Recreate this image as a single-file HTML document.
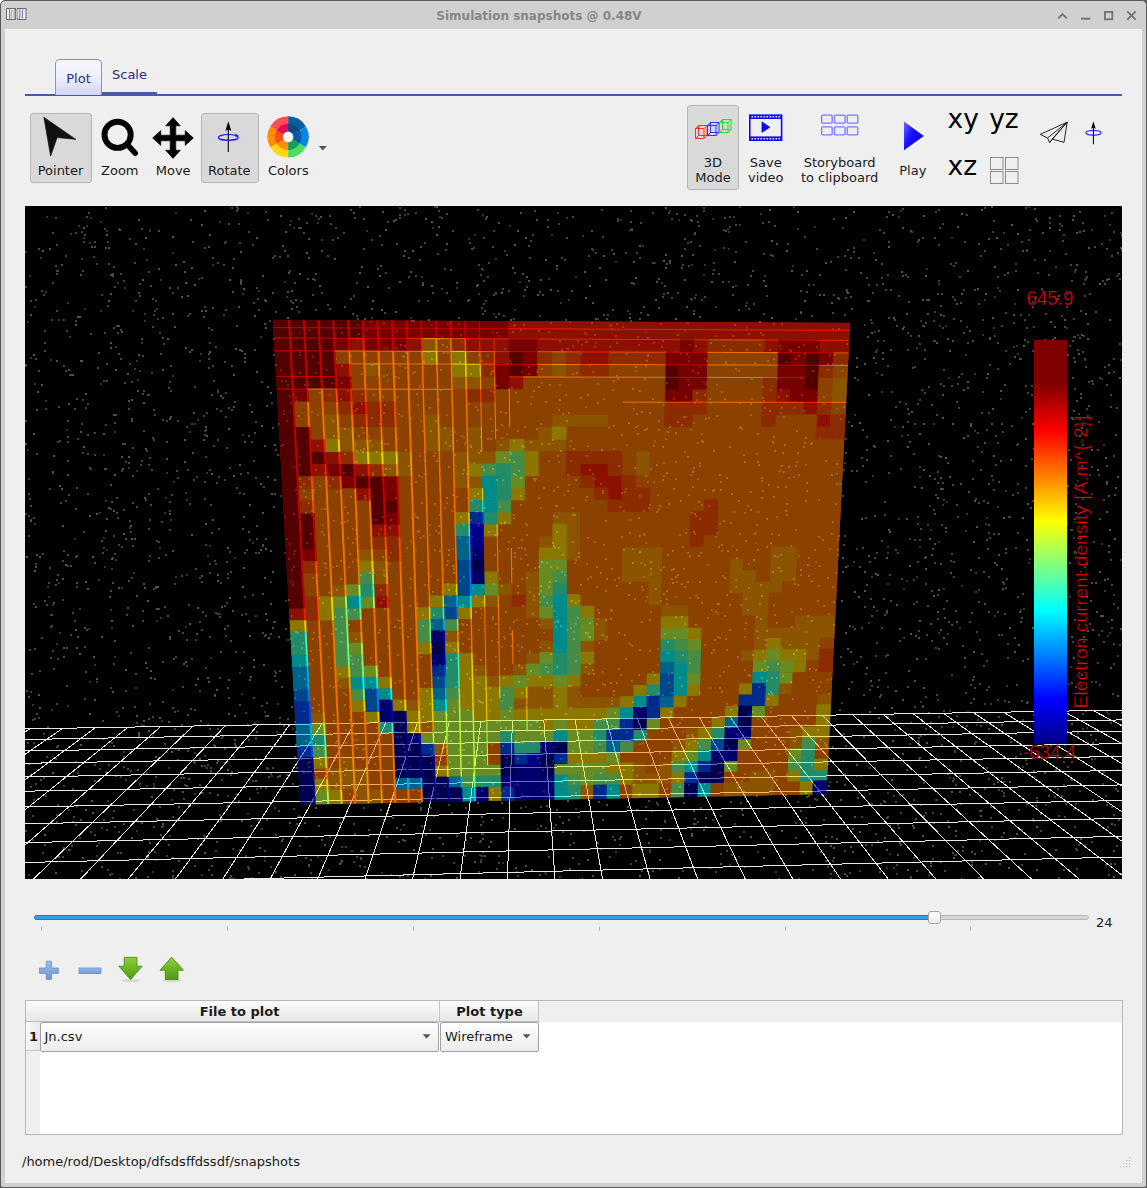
<!DOCTYPE html>
<html><head><meta charset="utf-8"><title>Simulation snapshots @ 0.48V</title>
<style>
html,body{margin:0;padding:0;}
body{width:1147px;height:1188px;overflow:hidden;background:#5f5f5f;font-family:"DejaVu Sans","Liberation Sans",sans-serif;font-size:13px;color:#1a1a1a;}
#win{position:absolute;left:0;top:0;width:1147px;height:1188px;box-sizing:border-box;border:1px solid #5a5a5a;background:#d0d0d0;border-radius:5px 5px 3px 3px;overflow:hidden;}
#content{position:absolute;left:4px;top:28px;width:1137px;height:1154px;background:#efefef;}
.abs{position:absolute;}
#title{position:absolute;left:0;top:0;width:1076px;height:29px;line-height:30px;text-align:center;font-weight:bold;color:#868686;font-size:12px;}
.lbl{position:absolute;text-align:center;white-space:nowrap;transform:translateX(-50%);line-height:15px;}
.btn{position:absolute;box-sizing:border-box;border:1px solid #b4b4b4;border-radius:3px;background:#d9d9d9;}
</style></head><body>
<div class="abs" style="left:0;top:0;width:5px;height:5px;background:#fff;"></div>
<div id="win">
<div id="title">Simulation snapshots @ 0.48V</div>
<div id="content"></div>
</div>
<!-- all following are absolutely positioned in page coords -->
<div id="ui" class="abs" style="left:0;top:0;width:1147px;height:1188px;">
<svg class="abs" style="left:0;top:0" width="1147" height="30" viewBox="0 0 1147 30">
 <g>
  <rect x="6.5" y="8.5" width="9" height="11" fill="#ececec" stroke="#6e6e6e"/>
  <rect x="17.5" y="8.5" width="8.5" height="11" fill="#ececec" stroke="#6e6e6e"/>
  <path d="M9.6 9v10" stroke="#8a8a9a" stroke-width="1.2"/><path d="M11.8 9.5l-.6 9" stroke="#c89a9a" stroke-width="1"/><path d="M14 9.5l-.5 9" stroke="#8fe08f" stroke-width="1.3"/>
  <path d="M17.6 9.5l.2 9" stroke="#f090e0" stroke-width="1.2"/><path d="M20 9l-.4 10" stroke="#8a8a8a" stroke-width="1.1"/><path d="M22.6 9.5l-.3 9" stroke="#7a86b8" stroke-width="1.2"/><path d="M15.4 9v10" stroke="#7a7a7a" stroke-width="1.6"/>
 </g>
 <g fill="none" stroke="#737373" stroke-width="1.8">
  <path d="M1058.2 18.3l4.3-4.3l4.3 4.3"/>
  <path d="M1081 18.7h9.4" stroke-width="2"/>
  <rect x="1104.9" y="11.9" width="7.4" height="7.4"/>
  <path d="M1127.3 11.3l8.4 8.4M1135.7 11.3l-8.4 8.4"/>
 </g>
</svg>

<div class="abs" style="left:25px;top:94px;width:1097px;height:2px;background:#4a5aa0;"></div>
<div class="abs" style="left:102px;top:92px;width:55px;height:4px;background:#4a5aa0;"></div>
<div class="abs" style="left:55px;top:59px;width:47px;height:36px;box-sizing:border-box;border:1px solid #8a92be;border-bottom:none;border-radius:5px 5px 0 0;background:linear-gradient(#f6f6ff 0%,#f0f0fd 45%,#d2d6f3 100%);"></div>
<div class="lbl" style="left:78.5px;top:71px;color:#2e2e7a;">Plot</div>
<div class="lbl" style="left:129.5px;top:67px;color:#2e2e7a;">Scale</div>

<div class="btn" style="left:29.5px;top:113px;width:62px;height:70px;"></div>
<div class="btn" style="left:200.5px;top:113px;width:58px;height:70px;"></div>
<div class="btn" style="left:687px;top:105px;width:52px;height:85px;"></div>
<svg class="abs" style="left:0;top:100px" width="1147" height="100" viewBox="0 100 1147 100">
 <defs>
  <linearGradient id="gplay" x1="0" y1="0" x2="1" y2="0.6"><stop offset="0" stop-color="#6a6aff"/><stop offset="0.45" stop-color="#1a10ff"/><stop offset="1" stop-color="#0a00f0"/></linearGradient>
 </defs>
 <!-- pointer -->
 <path d="M43.8 117.2L76 139.4L57.2 137.6L50.6 156.2Z" fill="#111" stroke="#111" stroke-width="0.6" stroke-linejoin="round"/>
 <!-- zoom -->
 <circle cx="117.6" cy="134.8" r="13.1" fill="none" stroke="#000" stroke-width="5.9"/>
 <path d="M127.6 144.8L135.2 153.2" stroke="#000" stroke-width="5.6" stroke-linecap="round"/>
 <!-- move -->
 <path d="M173 117.6l7.4 8.2h-4.6v9.4h9.4v-4.6l8.2 7.4l-8.2 7.4v-4.6h-9.4v9.4h4.6l-7.4 8.2l-7.4-8.2h4.6v-9.4h-9.4v4.6l-8.2-7.4l8.2-7.4v4.6h9.4v-9.4h-4.6z" fill="#000" stroke="#000" stroke-width="0.6" stroke-linejoin="round"/>
 <!-- rotate -->
 <ellipse cx="228.3" cy="137.4" rx="10" ry="2.9" fill="none" stroke="#1a1aff" stroke-width="1.2"/>
 <path d="M235.5 133.6l3.4 2.4l-3.6 1z" fill="#1a1aff"/>
 <path d="M228.3 152V128" stroke="#000" stroke-width="1.1"/>
 <path d="M228.3 121.3l3 9.6l-3-1.4l-3 1.4z" fill="#000"/>
 <!-- colour wheel -->
 <g transform="translate(288.1 136.9)">
  <path d="M0 0L0 -20.6A20.6 20.6 0 0 1 17.84 -10.3Z" fill="#0b5c9e"/>
  <path d="M0 0L17.84 -10.3A20.6 20.6 0 0 1 17.84 10.3Z" fill="#0c86dc"/>
  <path d="M0 0L17.84 10.3A20.6 20.6 0 0 1 0 20.6Z" fill="#4fdc64"/>
  <path d="M0 0L0 20.6A20.6 20.6 0 0 1 -17.84 10.3Z" fill="#ffd814"/>
  <path d="M0 0L-17.84 10.3A20.6 20.6 0 0 1 -17.84 -10.3Z" fill="#ff8e0c"/>
  <path d="M0 0L-17.84 -10.3A20.6 20.6 0 0 1 0 -20.6Z" fill="#ff4e52"/>
  <path d="M0 0L0 -13.2A13.2 13.2 0 0 1 11.43 -6.6Z" fill="#0a4a82"/>
  <path d="M0 0L11.43 -6.6A13.2 13.2 0 0 1 11.43 6.6Z" fill="#0b5c9e"/>
  <path d="M0 0L11.43 6.6A13.2 13.2 0 0 1 0 13.2Z" fill="#0ea25c"/>
  <path d="M0 0L0 13.2A13.2 13.2 0 0 1 -11.43 6.6Z" fill="#ff8e0c"/>
  <path d="M0 0L-11.43 6.6A13.2 13.2 0 0 1 -11.43 -6.6Z" fill="#ff500e"/>
  <path d="M0 0L-11.43 -6.6A13.2 13.2 0 0 1 0 -13.2Z" fill="#e20c5a"/>
  <circle r="5.3" fill="#fafafa"/>
 </g>
 <path d="M318.8 146h8l-4 4.4z" fill="#555"/>
 <!-- 3D cubes -->
 <g fill="none" stroke-width="1">
  <g stroke="#ff3030"><rect x="695.5" y="128.5" width="8.5" height="10"/><rect x="698.5" y="125.5" width="8.5" height="10"/><path d="M695.5 128.5l3-3M704 128.5l3-3M695.5 138.5l3-3M704 138.5l3-3"/></g>
  <g stroke="#3030ff"><rect x="707.5" y="125.5" width="8.5" height="10"/><rect x="710.5" y="122.5" width="8.5" height="10"/><path d="M707.5 125.5l3-3M716 125.5l3-3M707.5 135.5l3-3M716 135.5l3-3"/></g>
  <g stroke="#20e020"><rect x="719.5" y="122.5" width="8.5" height="10"/><rect x="722.5" y="119.5" width="8.5" height="10"/><path d="M719.5 122.5l3-3M728 122.5l3-3M719.5 132.5l3-3M728 132.5l3-3"/></g>
 </g>
 <!-- save video -->
 <rect x="749" y="114.4" width="33.4" height="26.6" fill="#0a0aff"/>
 <rect x="750.6" y="119" width="30.2" height="17.4" fill="#efefef"/>
 <path d="M751.5 116.7h30M751.5 138.7h30" stroke="#efefef" stroke-width="1.6" stroke-dasharray="1.6 1.4"/>
 <path d="M761.6 121.3l8.8 5.9l-8.8 5.9z" fill="#0a0aff"/>
 <!-- storyboard -->
 <g fill="none" stroke="#6e6eff" stroke-width="1.3" opacity="0.9">
  <rect x="821.6" y="115.2" width="10.6" height="8" rx="1"/><rect x="834.4" y="115.2" width="10.6" height="8" rx="1"/><rect x="847.2" y="115.2" width="10.6" height="8" rx="1"/>
  <rect x="821.6" y="126.8" width="10.6" height="8" rx="1"/><rect x="834.4" y="126.8" width="10.6" height="8" rx="1"/><rect x="847.2" y="126.8" width="10.6" height="8" rx="1"/>
 </g>
 <!-- play -->
 <path d="M904 121.5L923.8 135.9L904 150.2Z" fill="url(#gplay)"/>
 <!-- grid icon -->
 <g fill="none" stroke="#8c8c8c" stroke-width="1"><rect x="990.5" y="157.5" width="12.5" height="12"/><rect x="1005.5" y="157.5" width="12.5" height="12"/><rect x="990.5" y="171.5" width="12.5" height="12"/><rect x="1005.5" y="171.5" width="12.5" height="12"/></g>
 <!-- paper plane -->
 <g fill="none" stroke="#111" stroke-width="0.9" stroke-linejoin="round"><path d="M1067.2 122.1L1040.2 134.4L1047.6 138L1049.6 142.6L1052.2 139L1064 142.4Z"/><path d="M1067.2 122.1L1047.6 138M1067.2 122.1L1052.2 139M1067.2 122.1L1049.6 142.6"/></g>
 <!-- small rotate -->
 <ellipse cx="1093.4" cy="132.8" rx="7.6" ry="2.3" fill="none" stroke="#1a1aff" stroke-width="1.1"/>
 <path d="M1093.4 144.2V127" stroke="#000" stroke-width="1"/>
 <path d="M1093.4 121.3l2.3 7.4l-2.3-1l-2.3 1z" fill="#000"/>
 <text x="947.6" y="128.1" font-size="26.4" fill="#000" font-family="DejaVu Sans, Liberation Sans, sans-serif">xy</text>
 <text x="989.2" y="128.1" font-size="26.4" fill="#000" font-family="DejaVu Sans, Liberation Sans, sans-serif">yz</text>
 <text x="947.6" y="175.4" font-size="26.4" fill="#000" font-family="DejaVu Sans, Liberation Sans, sans-serif">xz</text>
</svg>
<div class="lbl" style="left:60.5px;top:163px;">Pointer</div>
<div class="lbl" style="left:119.8px;top:163px;">Zoom</div>
<div class="lbl" style="left:173.2px;top:163px;">Move</div>
<div class="lbl" style="left:229.3px;top:163px;">Rotate</div>
<div class="lbl" style="left:288.3px;top:163px;">Colors</div>
<div class="lbl" style="left:713px;top:155px;">3D<br>Mode</div>
<div class="lbl" style="left:765.8px;top:155px;">Save<br>video</div>
<div class="lbl" style="left:839.6px;top:155px;">Storyboard<br>to clipboard</div>
<div class="lbl" style="left:912.8px;top:163px;">Play</div>

<svg class="abs" style="left:25px;top:206px" width="1097" height="673" viewBox="25 206 1097 673">
<rect x="25" y="206" width="1097" height="673" fill="#000"/>
<path d="M146 785h2M320 759h2M409 587h2M153 783h2M815 561h2M264 711h2M500 444h2M563 494h2M132 310h2M334 755h2M769 834h2M770 691h2M200 353h2M355 734h2M325 762h2M189 431h2M729 864h2M293 227h2M423 422h2M883 340h2M400 829h2M271 775h2M930 529h2M517 644h2M755 532h2M1074 271h2M493 313h2M568 484h2M173 481h2M206 472h2M274 670h2M100 221h2M853 561h2M290 220h2M687 456h2M110 609h2M495 293h2M949 777h2M213 744h2M1066 492h2M1020 609h2M795 529h2M717 613h2M789 644h2M441 288h2M611 703h2M419 455h2M69 336h2M1028 206h2M920 320h2M482 821h2M654 262h2M489 710h2M836 408h2M623 722h2M1099 684h2M371 317h2M185 492h2M744 636h2M657 648h2M96 681h2M197 419h2M410 540h2M100 310h2M943 588h2M626 444h2M557 212h2M741 428h2M854 414h2M357 339h2M530 403h2M103 537h2M922 389h2M994 615h2M906 580h2M667 729h2M363 432h2M370 476h2M118 228h2M330 667h2M566 217h2M25 251h2M144 313h2M1066 522h2M639 846h2M1003 757h2M199 725h2M321 239h2M83 237h2M446 414h2M613 694h2M88 628h2M615 261h2M737 708h2M585 406h2M820 681h2M631 680h2M1028 314h2M999 730h2M807 615h2M405 699h2M645 600h2M537 828h2M461 749h2M1034 776h2M1017 353h2M284 552h2M247 212h2M194 423h2M231 877h2M853 663h2M869 767h2M56 643h2M90 217h2M1021 829h2M671 817h2M67 302h2M598 642h2M395 593h2M81 258h2M502 862h2M146 772h2M1015 263h2M928 874h2M551 605h2M69 849h2M503 694h2M876 372h2M312 659h2M762 651h2M439 216h2M1034 298h2M937 734h2M398 377h2M86 225h2M424 473h2M217 389h2M597 318h2M889 853h2M954 854h2M98 842h2M105 500h2M366 329h2M1077 480h2M328 656h2M985 523h2M591 736h2M898 216h2M975 572h2M744 669h2M676 581h2M111 627h2M226 806h2M1086 727h2M84 308h2M152 871h2M228 802h2M814 226h2M114 656h2M380 528h2M541 713h2M841 702h2M276 731h2M578 600h2M322 524h2M410 317h2M633 403h2M744 628h2M739 206h2M952 726h2M558 461h2M1021 417h2M657 664h2M172 252h2M984 703h2M1101 378h2M143 248h2M472 587h2M887 552h2M836 473h2M544 871h2M121 587h2M966 513h2M302 642h2M437 782h2M695 823h2M67 705h2M575 660h2M89 242h2M856 548h2M66 429h2M124 287h2M723 345h2M716 384h2M873 252h2M699 366h2M299 331h2M356 747h2M847 565h2M639 495h2M837 549h2M157 318h2M749 714h2M575 276h2M427 726h2M317 856h2M431 324h2M765 644h2M540 590h2M1084 359h2M805 464h2M966 326h2M414 736h2M1089 474h2M129 527h2M448 734h2M141 342h2M497 606h2M707 617h2M104 566h2M1028 562h2M770 389h2M830 678h2M209 545h2M560 302h2M219 221h2M456 440h2M715 306h2M868 622h2M703 274h2M1101 543h2M556 516h2M898 518h2M979 840h2M623 549h2M1104 215h2M543 632h2M1013 346h2M859 870h2M992 479h2M352 528h2M615 851h2M168 767h2M161 720h2M280 495h2M186 574h2M1084 279h2M690 429h2M446 633h2M234 557h2M990 703h2M1113 594h2M513 440h2M103 454h2M434 206h2M872 475h2M339 685h2M1073 537h2M1069 596h2M449 645h2M746 302h2M514 309h2M710 402h2M186 282h2M456 287h2M640 562h2M689 597h2M755 542h2M715 581h2M458 749h2M551 234h2M315 877h2M162 754h2M175 576h2M316 776h2M685 416h2M819 437h2M45 400h2M545 873h2M482 269h2M40 257h2M922 705h2M926 268h2M795 318h2M909 743h2M764 275h2M393 727h2M397 438h2M160 617h2M1016 444h2M517 781h2M575 623h2M1075 803h2M419 652h2M501 646h2M569 321h2M886 867h2M956 808h2M582 235h2M34 383h2M509 225h2M258 290h2M554 547h2M568 299h2M172 689h2M916 347h2M704 264h2M527 678h2M429 534h2M661 282h2M920 701h2M669 839h2M239 672h2M595 342h2M301 748h2M421 708h2M545 827h2M156 308h2M169 835h2M938 632h2M293 645h2M1080 571h2M361 393h2M894 729h2M371 444h2M745 598h2M797 228h2M420 420h2M491 430h2M919 476h2M642 245h2M139 370h2M430 575h2M501 700h2M900 210h2M637 425h2M993 327h2M321 508h2M1003 232h2M933 423h2M525 806h2M28 478h2M70 233h2M335 358h2M395 408h2M909 538h2M118 715h2M106 549h2M481 613h2M431 623h2M701 433h2M198 278h2M942 504h2M117 282h2M684 451h2M921 389h2M111 568h2M625 488h2M405 705h2M100 383h2M47 586h2M410 417h2M499 506h2M684 330h2M1006 685h2M29 275h2M1106 711h2M480 617h2M792 265h2M1014 837h2M1091 229h2M495 656h2M718 823h2M160 279h2M600 772h2M650 611h2M738 856h2M433 660h2M735 586h2M482 214h2M453 565h2M664 633h2M1066 327h2M780 647h2M830 878h2M499 550h2M186 499h2M357 324h2M164 512h2M874 331h2M59 632h2M994 296h2M480 859h2M144 320h2M1067 293h2M493 583h2M287 777h2M381 872h2M1107 635h2M387 380h2M793 206h2M785 725h2M938 283h2M951 237h2M876 610h2M712 218h2M1104 590h2M986 517h2M616 585h2M1034 259h2M107 800h2M654 440h2M136 470h2M351 659h2M175 212h2M945 325h2M285 600h2M554 610h2M427 300h2M773 604h2M134 368h2M863 751h2M643 576h2M901 435h2M829 781h2M678 219h2M453 707h2M727 228h2M657 494h2M459 580h2M777 556h2M1000 398h2M728 248h2M586 563h2M709 687h2M185 626h2M543 487h2M871 576h2M141 724h2M594 478h2M770 789h2M306 222h2M492 332h2M881 391h2M452 548h2M455 657h2M328 869h2M575 808h2M887 792h2M210 657h2M270 581h2M514 784h2M965 354h2M894 426h2M94 664h2M166 472h2M257 792h2M553 746h2M723 671h2M583 830h2M504 250h2M676 352h2M684 623h2M682 731h2M649 849h2M27 449h2M1005 490h2M470 647h2M585 499h2M252 542h2M1120 232h2M58 582h2M546 562h2M771 533h2M232 848h2M732 545h2M170 519h2M171 799h2M681 718h2M99 512h2M739 224h2M52 604h2M690 828h2M647 738h2M500 522h2M813 284h2M277 703h2M204 836h2M1068 683h2M775 871h2M284 281h2M445 701h2M688 356h2M1016 345h2M799 749h2M204 430h2M1109 224h2M757 718h2M656 511h2M1027 701h2M298 675h2M1022 766h2M548 278h2M484 688h2M570 685h2M948 377h2M597 618h2M1014 303h2M201 874h2M938 541h2M695 294h2M467 338h2M46 216h2M1063 735h2M390 874h2M891 391h2M50 359h2M981 850h2M292 728h2M887 686h2M89 681h2M1023 608h2M201 844h2M805 817h2M1049 250h2M115 559h2M760 213h2M580 695h2M242 293h2M481 466h2M1070 666h2M133 572h2M324 753h2M1078 413h2M693 422h2M177 710h2M390 552h2M146 259h2M1091 493h2M421 561h2M903 637h2M264 860h2M691 264h2M1060 770h2M800 823h2M435 759h2M974 430h2M1011 838h2M468 238h2M286 296h2M748 587h2M1044 607h2M502 817h2M255 738h2M199 360h2M1109 632h2M776 779h2M289 411h2M421 476h2M469 534h2M74 538h2M842 227h2M548 460h2M395 736h2M733 216h2M566 629h2M997 287h2M120 805h2M793 740h2M311 213h2M28 874h2M495 258h2M519 281h2M714 249h2M766 669h2M711 609h2M1077 334h2M296 400h2M674 752h2M149 229h2M295 397h2M87 738h2M79 608h2M48 596h2M746 327h2M45 291h2M280 445h2M916 576h2M887 546h2M51 709h2M368 835h2M430 748h2M669 210h2M388 647h2M627 310h2M32 704h2M318 649h2M479 854h2M496 721h2M335 628h2M965 530h2M997 506h2M78 225h2M629 229h2M25 365h2M34 523h2M473 462h2M794 407h2M539 315h2M155 587h2M848 421h2M959 627h2M942 722h2M474 234h2M976 724h2M212 264h2M974 373h2M128 467h2M578 816h2M298 815h2M219 613h2M1056 672h2M114 431h2M261 828h2M896 873h2M289 580h2M949 710h2M675 351h2M136 830h2M667 802h2M620 219h2M759 344h2M247 813h2M227 795h2M156 620h2M136 360h2M1058 393h2M98 579h2M399 365h2M569 445h2M1117 655h2M242 434h2M1029 558h2M235 793h2M825 860h2M691 474h2M298 349h2M852 626h2M260 336h2M929 505h2M76 806h2M1083 641h2M194 752h2M254 722h2M730 591h2M350 655h2M1094 758h2M432 227h2M1109 239h2M613 448h2M317 222h2M947 633h2M961 585h2M982 334h2M919 546h2M1117 769h2M541 382h2M629 313h2M864 324h2M483 628h2M27 321h2M984 299h2M643 533h2M946 501h2M779 761h2M461 341h2M165 497h2M202 792h2M619 844h2M539 601h2M466 541h2M322 368h2M172 375h2M471 552h2M424 460h2M68 809h2M115 346h2M829 548h2M366 230h2M728 231h2M565 394h2M421 276h2M478 293h2M226 806h2M704 644h2M832 363h2M1108 713h2M207 555h2M875 362h2M241 693h2M939 325h2M463 437h2M30 357h2M907 434h2M1107 621h2M876 349h2M137 379h2M34 306h2M585 684h2M903 588h2M728 281h2M312 577h2M1103 444h2M404 214h2M379 723h2M1060 429h2M1042 290h2M159 547h2M735 285h2M691 299h2M703 381h2M148 839h2M96 855h2M106 230h2M588 636h2M556 567h2M776 516h2M408 465h2M599 743h2M229 862h2M389 468h2M508 823h2M443 873h2M757 851h2M149 230h2M463 749h2M697 478h2M645 331h2" stroke="#343434" stroke-width="2" fill="none" shape-rendering="crispEdges" transform="translate(0 1)"/>
<path d="M688 360h2M143 725h2M101 294h2M881 277h2M210 770h2M837 256h2M297 502h2M953 576h2M639 743h2M728 665h2M725 361h2M742 814h2M216 482h2M970 569h2M471 500h2M532 613h2M1041 288h2M906 769h2M804 442h2M194 386h2M1018 809h2M828 613h2M832 312h2M845 269h2M162 419h2M357 318h2M261 705h2M1008 701h2M726 477h2M445 746h2M776 377h2M845 438h2M1085 710h2M597 689h2M421 825h2M940 563h2M489 687h2M716 415h2M433 695h2M913 857h2M202 611h2M350 380h2M978 877h2M996 564h2M540 423h2M331 382h2M141 460h2M225 725h2M82 270h2M532 741h2M439 664h2M878 330h2M774 352h2M306 684h2M217 613h2M358 435h2M908 733h2M719 637h2M774 225h2M62 599h2M1084 844h2M554 621h2M1079 790h2M694 297h2M142 393h2M480 274h2M719 772h2M573 842h2M513 318h2M561 257h2M446 502h2M1049 388h2M735 224h2M1060 770h2M1078 692h2M910 878h2M830 724h2M465 441h2M431 857h2M548 647h2M602 819h2M625 252h2M404 367h2M938 209h2M658 429h2M399 207h2M806 291h2M35 299h2M208 353h2M1037 359h2M1075 848h2M763 313h2M525 707h2M177 477h2M808 284h2M326 545h2M298 218h2M149 703h2M1082 498h2M267 768h2M663 293h2M60 502h2M181 724h2M575 602h2M1098 474h2M772 442h2M350 209h2M948 621h2M313 632h2M703 207h2M618 465h2M158 608h2M181 575h2M588 255h2M609 856h2M535 478h2M1071 529h2M285 380h2M874 557h2M513 514h2M832 328h2M356 282h2M475 669h2M946 643h2M211 532h2M870 598h2M1098 421h2M152 716h2M467 300h2M533 599h2M938 648h2M983 665h2M248 435h2M417 603h2M46 756h2M968 491h2M505 766h2M885 289h2M491 640h2M717 636h2M445 713h2M663 404h2M977 432h2M1040 830h2M482 702h2M140 815h2M830 261h2M73 816h2M148 394h2M256 287h2M699 401h2M790 545h2M449 595h2M125 690h2M788 760h2M420 537h2M853 247h2M151 469h2M153 826h2M768 484h2M673 488h2M503 315h2M1035 341h2M679 677h2M186 730h2M827 369h2M692 370h2M240 279h2M940 383h2M297 632h2M273 506h2M597 786h2M558 409h2M531 396h2M507 363h2M836 463h2M1064 744h2M230 875h2M422 282h2M1074 388h2M780 554h2M115 414h2M664 285h2M1015 270h2M211 874h2M839 483h2M605 520h2M756 630h2M914 366h2M257 298h2M130 770h2M784 722h2M323 562h2M356 739h2M162 317h2M1029 408h2M284 250h2M479 841h2M426 690h2M471 248h2M1085 366h2M760 332h2M823 819h2M652 870h2M656 802h2M32 839h2M977 446h2M162 337h2M136 722h2M249 404h2M541 368h2M588 673h2M545 720h2M451 812h2M1061 449h2M787 243h2M397 619h2M594 541h2M832 586h2M324 574h2M191 658h2M1081 465h2M94 432h2M770 254h2M30 786h2M756 752h2M871 803h2M298 415h2M997 368h2M155 859h2M1034 460h2M1113 231h2M405 449h2M428 351h2M875 833h2M951 385h2M240 473h2M104 332h2M564 259h2M918 741h2M630 863h2M372 472h2M694 402h2M697 821h2M503 790h2M184 784h2M356 559h2M811 315h2M444 507h2M714 639h2M67 565h2M226 561h2M613 380h2M27 742h2M1031 394h2M736 733h2M464 443h2M239 849h2M753 303h2M833 294h2M76 586h2M645 475h2M1051 381h2M503 677h2M694 740h2M687 379h2M498 335h2M512 725h2M341 365h2M738 370h2M696 399h2M233 406h2M643 510h2M243 493h2M279 670h2M225 635h2M844 850h2M537 639h2M399 876h2M539 762h2M960 760h2M782 740h2M865 673h2M275 834h2M140 464h2M52 282h2M746 800h2M248 435h2M845 745h2M827 679h2M166 855h2M487 355h2M871 685h2M281 686h2M795 465h2M600 572h2M643 534h2M199 577h2M199 784h2M55 217h2M172 877h2M317 445h2M337 419h2M633 408h2M267 476h2M504 348h2M1016 684h2M1031 458h2M978 589h2M882 283h2M217 728h2M774 555h2M456 496h2M725 638h2M132 502h2M752 711h2M708 721h2M1062 559h2M1033 326h2M204 247h2M126 614h2M795 837h2M396 243h2M553 515h2M888 241h2M194 865h2M273 338h2M408 257h2M321 292h2M188 604h2M664 820h2M880 694h2M708 505h2M657 804h2M529 591h2M504 668h2M28 535h2M573 638h2M313 791h2M1017 596h2M142 610h2M44 600h2M752 270h2M556 740h2M438 399h2M418 300h2M1084 358h2M116 711h2M974 289h2M444 785h2M102 552h2M782 675h2M209 469h2M1062 608h2M943 369h2M506 433h2M104 468h2M989 537h2M792 698h2M370 657h2M318 218h2M424 242h2M940 305h2M951 553h2M774 352h2M478 264h2M949 772h2M924 358h2M881 627h2M343 232h2M368 472h2M248 531h2M1013 322h2M457 779h2M611 328h2M437 579h2M560 450h2M224 605h2M1103 499h2M862 429h2M496 385h2M1039 486h2M418 802h2M736 549h2M863 694h2M570 460h2M776 243h2M245 712h2M300 227h2M975 741h2M934 311h2M584 332h2M273 621h2M490 438h2M971 612h2M62 856h2M1101 243h2M131 577h2M325 567h2M408 276h2M67 436h2M569 844h2M52 650h2M1072 340h2M857 797h2M204 765h2M478 871h2M646 833h2M521 547h2M809 805h2M49 567h2M691 709h2M608 427h2M141 228h2M152 735h2M248 739h2M341 632h2M236 210h2M265 715h2M951 674h2M747 505h2M812 869h2M38 717h2M934 513h2M647 354h2M797 801h2M205 544h2M521 539h2M1084 646h2M164 743h2M227 625h2M340 398h2M1021 617h2M213 380h2M661 730h2M251 877h2M728 727h2M345 742h2M410 628h2M33 517h2M85 407h2M273 354h2M374 741h2M982 833h2M512 568h2M371 239h2M739 402h2M513 461h2M957 516h2M478 629h2M523 295h2M373 572h2M407 213h2M836 781h2M814 549h2M159 332h2M744 773h2M818 401h2M605 558h2M917 241h2M290 300h2M286 774h2M981 451h2M778 567h2M451 510h2M1058 415h2M559 816h2M778 753h2M387 443h2M662 296h2M842 495h2M295 489h2M225 392h2M473 247h2M106 829h2M645 365h2M105 771h2M491 789h2M1091 466h2M732 294h2M209 563h2M1073 336h2M360 858h2M369 572h2M868 300h2M661 346h2M1021 700h2M744 512h2M266 767h2M617 218h2M148 493h2M355 538h2M984 788h2M704 783h2M247 866h2M914 706h2M684 214h2M211 865h2M539 874h2M834 354h2M660 837h2M754 533h2M781 465h2M850 257h2M1037 639h2M490 373h2M932 858h2M925 696h2M1072 641h2M386 374h2M630 210h2M737 787h2M687 735h2M887 583h2M82 399h2M941 293h2M517 784h2M490 390h2M540 707h2M175 656h2M1080 310h2M827 763h2M417 782h2M215 346h2M142 620h2M56 814h2M751 378h2M548 331h2M748 308h2M94 454h2M176 470h2M332 773h2M75 556h2M1022 719h2M828 693h2M943 608h2M1083 283h2M699 746h2M114 422h2M764 684h2M984 603h2M668 212h2M1015 547h2M67 460h2M117 852h2M319 485h2M1106 804h2M314 279h2M1011 721h2M523 446h2M333 344h2M39 670h2M160 353h2M722 281h2M188 804h2M648 800h2M1017 532h2M843 664h2M228 407h2M55 861h2M81 423h2M843 469h2M52 232h2M666 263h2M63 365h2M765 639h2M89 868h2M953 778h2M586 341h2M43 777h2M773 358h2M743 454h2M729 604h2M492 783h2M483 237h2M913 453h2M750 414h2M896 864h2M636 716h2M703 210h2M536 371h2M924 392h2M75 320h2M44 342h2M838 298h2M56 244h2M1058 815h2M65 255h2M902 208h2M483 759h2M483 280h2M387 221h2M860 775h2M572 216h2M109 874h2M602 767h2M865 481h2M883 598h2M817 600h2M93 256h2M689 867h2M988 728h2M1001 790h2M444 746h2M113 535h2M1095 739h2M952 296h2M835 503h2M292 581h2M784 741h2M587 537h2M1035 296h2M931 590h2M110 508h2M550 566h2M814 798h2M417 800h2M154 414h2M937 594h2M1101 630h2M918 630h2M385 272h2M839 709h2M500 411h2M56 310h2M434 549h2M880 803h2M323 534h2M406 757h2M666 598h2M636 775h2M129 520h2M918 758h2M649 412h2M1026 803h2M774 555h2M1116 275h2M687 242h2M474 655h2M936 414h2M143 390h2M279 256h2M172 816h2M361 716h2M978 303h2M212 257h2M931 640h2M352 663h2M340 522h2M695 595h2M216 408h2M329 394h2M1102 280h2M1041 301h2M206 412h2M490 798h2M231 207h2M639 257h2M707 564h2M1010 459h2M747 284h2M360 574h2M1008 516h2M513 325h2M265 538h2M549 581h2M441 336h2M1120 719h2M566 237h2M470 445h2M382 516h2M399 217h2M205 456h2M1072 377h2M730 349h2M1007 244h2M740 802h2M1033 714h2M979 810h2M541 443h2M430 807h2M726 594h2M998 634h2M638 674h2M711 764h2M195 568h2M520 329h2M402 605h2M706 360h2M367 435h2M832 521h2M412 372h2M384 312h2M1077 591h2M1078 844h2M934 478h2M147 876h2M268 776h2M964 241h2M580 353h2M1065 253h2M762 490h2M356 794h2M123 751h2M151 372h2M762 397h2M658 692h2M682 654h2M247 472h2M831 533h2M442 843h2M868 284h2M761 477h2M870 319h2M364 866h2M266 619h2M724 615h2M1048 550h2M616 342h2M718 273h2M507 797h2M585 341h2M805 500h2M812 833h2M461 435h2M309 663h2M1055 266h2M982 319h2M1058 480h2M255 615h2M1073 808h2M785 750h2M1003 795h2M956 401h2M413 320h2M1082 222h2M57 270h2M565 777h2M671 569h2M383 569h2M716 532h2M539 726h2M453 568h2M594 737h2M919 343h2M51 319h2M43 294h2M446 213h2M443 569h2M283 410h2M135 687h2M516 871h2M991 826h2M980 255h2M222 397h2M620 674h2M452 230h2M1063 674h2M777 486h2M658 508h2M257 819h2M1090 600h2M625 658h2M357 659h2M536 219h2M67 554h2M187 750h2M274 675h2M208 869h2M52 472h2M825 460h2M453 862h2M164 606h2M585 666h2M229 467h2M219 677h2M663 475h2M118 353h2M223 264h2M630 221h2M291 569h2M386 347h2M540 585h2M804 236h2M811 580h2M797 584h2M602 236h2M1032 301h2M266 702h2M380 442h2M415 275h2M764 660h2M515 740h2M1070 529h2M232 291h2M568 685h2M952 852h2M225 416h2M997 699h2M310 872h2M963 289h2M469 242h2M668 803h2M363 218h2M988 412h2M960 483h2M684 238h2M388 557h2M72 788h2M553 827h2M816 346h2M585 632h2M305 740h2M682 264h2M504 638h2M951 624h2M238 223h2M383 347h2M175 748h2M938 455h2M543 790h2M509 627h2M696 215h2M394 682h2M449 761h2M1037 579h2M480 861h2M1069 345h2M986 802h2M920 528h2M354 609h2M442 855h2M641 870h2M534 210h2M495 384h2M431 358h2M739 533h2M196 476h2M132 475h2M1032 350h2M890 600h2M59 440h2M159 806h2M419 802h2M245 855h2M493 230h2M1075 503h2M955 835h2M401 415h2M559 340h2M152 437h2M719 523h2M671 297h2M509 360h2M168 844h2M542 731h2M786 753h2M289 270h2M165 554h2M1089 293h2M129 238h2M169 529h2M857 379h2M897 552h2M277 454h2M264 299h2M816 690h2M616 682h2M532 234h2M329 836h2M101 540h2M675 478h2M747 609h2M606 318h2M333 520h2M1058 877h2M653 342h2M713 262h2M123 766h2M722 575h2M77 438h2M1044 259h2M971 861h2M662 694h2M988 532h2M1086 276h2M490 418h2M767 761h2M401 742h2M143 430h2M912 367h2M182 632h2M695 515h2M1080 397h2M318 825h2M256 788h2M134 262h2M465 729h2M341 779h2M922 237h2M555 824h2M503 636h2M1076 849h2M1025 207h2M875 351h2M468 762h2M861 457h2M917 516h2M356 856h2M937 293h2M420 809h2M279 722h2M401 633h2M925 812h2M993 489h2M1086 408h2M851 308h2M895 549h2M827 866h2M849 872h2M610 324h2M79 837h2M1007 657h2M1001 325h2M558 223h2M819 274h2M49 488h2M614 712h2M312 356h2M208 358h2M1042 601h2M392 817h2M104 228h2M370 321h2M356 315h2M429 829h2M914 539h2M862 465h2M383 375h2M53 668h2M1082 351h2M383 598h2M412 789h2M862 547h2M355 529h2M415 481h2M562 831h2M120 358h2M194 793h2M298 311h2M944 870h2M224 242h2M1050 745h2M796 461h2M1062 240h2M192 241h2M976 821h2M189 503h2M270 866h2M1049 472h2M361 373h2M995 435h2M556 268h2M354 833h2M154 851h2M1110 406h2M270 773h2M854 377h2M988 686h2M573 782h2M227 773h2M697 372h2M220 582h2M254 349h2M603 544h2M83 531h2M963 332h2M957 850h2M383 574h2M414 513h2M886 216h2M612 309h2M898 295h2M43 733h2M484 310h2M578 732h2M813 370h2M773 770h2M760 584h2M315 372h2M280 369h2M221 779h2M55 265h2M890 349h2M818 645h2M1000 248h2M704 296h2M341 382h2M1076 645h2M416 728h2M454 649h2M954 299h2M614 579h2M907 276h2M1025 465h2M994 335h2M162 701h2M574 562h2M592 371h2M477 209h2M651 810h2M1116 407h2M1087 415h2M715 335h2M480 840h2M70 634h2M1071 761h2M619 506h2M90 468h2M652 671h2M548 856h2M149 555h2M863 239h2M494 554h2M781 407h2M885 655h2M887 365h2M340 862h2M348 566h2M149 457h2M899 640h2M269 320h2M925 728h2M547 226h2M823 396h2M682 546h2M434 452h2M209 728h2M275 449h2M927 524h2M768 221h2M262 545h2M890 455h2M647 481h2M136 595h2M986 767h2M352 313h2M926 299h2M211 394h2M34 648h2M1064 672h2M737 734h2M454 431h2M781 323h2M1114 863h2M258 552h2M879 229h2M1113 663h2M856 470h2M377 674h2M796 430h2M847 249h2M382 396h2M300 486h2M679 786h2M770 711h2M1073 357h2M954 751h2M398 413h2M294 550h2M272 257h2M624 491h2M203 415h2M145 499h2M958 407h2M1070 459h2M483 303h2M925 583h2M756 616h2M352 561h2M340 641h2M991 724h2M218 476h2M1012 494h2M470 529h2M28 515h2M281 380h2M231 365h2M377 727h2M913 603h2M329 308h2M414 371h2M233 756h2M492 792h2M347 520h2M128 408h2M446 292h2M542 294h2M1027 392h2M25 513h2M482 586h2M699 316h2M1029 229h2M666 603h2M1117 607h2M1112 693h2M125 779h2M969 794h2M1024 853h2M293 513h2M631 228h2M1095 681h2M1022 660h2M243 651h2M803 410h2M111 873h2M562 413h2M590 576h2M1088 381h2M94 834h2M645 806h2M248 620h2M793 578h2M210 772h2M1085 278h2M618 632h2M540 806h2M593 714h2M407 794h2M68 494h2M1082 713h2M655 588h2M869 731h2M518 650h2M384 575h2M422 614h2M640 312h2M416 607h2M895 406h2M843 733h2M409 605h2M180 777h2M965 692h2M664 821h2M459 695h2M234 743h2M318 770h2M698 501h2M193 479h2M833 218h2M475 595h2M492 618h2M1057 298h2M943 499h2M1018 768h2M972 478h2M842 370h2M712 819h2M103 547h2M557 486h2M1097 662h2M383 322h2M286 420h2M709 398h2M380 265h2M201 629h2M866 449h2M649 851h2M1059 215h2M908 413h2M227 805h2M671 218h2M1032 306h2M887 816h2M30 691h2M744 796h2M800 311h2M132 545h2M505 786h2M84 646h2M617 220h2M362 474h2M315 309h2M924 734h2M359 206h2M156 540h2M170 365h2M272 427h2M289 395h2M786 361h2M66 330h2M652 212h2M215 563h2M393 371h2M846 291h2M837 554h2M954 750h2M624 634h2M622 326h2M919 539h2M1009 516h2M208 327h2M153 786h2M900 468h2M345 729h2M415 212h2M808 557h2M344 521h2M1079 337h2M309 383h2M1049 222h2M66 685h2M478 523h2M440 630h2M955 854h2M487 276h2M743 790h2M1063 761h2M699 462h2M938 244h2M186 426h2M1045 511h2M112 273h2M449 300h2M315 772h2M114 286h2M596 586h2M502 479h2M982 391h2M415 516h2M585 751h2M230 774h2M786 514h2M476 511h2M1003 792h2M670 715h2M986 429h2M1032 818h2M429 524h2M420 797h2M609 325h2M327 304h2M540 733h2M578 863h2M605 780h2M547 219h2M701 440h2M431 646h2M1075 484h2M1065 390h2M938 716h2M112 557h2M561 781h2M998 716h2M299 456h2M226 447h2M530 240h2M1097 449h2M1121 712h2M329 591h2M729 226h2M1025 411h2M229 551h2M812 679h2M578 556h2M76 398h2M388 287h2M730 801h2M114 826h2M57 745h2M865 785h2M1106 248h2M304 678h2M454 454h2M577 340h2M1031 385h2M294 721h2M514 324h2M400 736h2M697 442h2M214 695h2M457 623h2M974 687h2M289 543h2M887 274h2M765 735h2M326 643h2M687 322h2M1040 665h2M688 265h2M518 665h2M986 660h2M264 445h2M773 323h2M936 799h2M41 637h2M274 807h2M925 556h2M690 298h2M397 736h2M63 319h2M865 844h2M684 779h2M329 733h2M344 506h2M363 807h2M934 340h2M705 383h2M997 611h2M772 255h2M708 417h2M581 344h2M1103 817h2M713 762h2M29 649h2M632 769h2M694 818h2M905 403h2M754 772h2M688 494h2M407 875h2M720 481h2M1082 728h2M252 772h2M87 453h2M1077 732h2M883 800h2M363 248h2M147 394h2M629 532h2M299 665h2M937 618h2M284 516h2M302 770h2M516 619h2M204 747h2M265 787h2M224 361h2M225 309h2M888 472h2M585 333h2M339 673h2M114 553h2M669 262h2M767 666h2M424 878h2M209 342h2M510 362h2M1113 358h2M1105 795h2M500 529h2M1021 241h2M329 215h2M1004 613h2M81 870h2M117 332h2M844 535h2M559 876h2M935 799h2M890 419h2M478 452h2M723 229h2M56 746h2M640 780h2M372 688h2M975 498h2M107 305h2M1025 385h2M748 563h2M255 552h2M699 518h2M237 208h2M553 545h2M808 795h2M62 560h2M75 508h2M1108 874h2M219 814h2M924 557h2M631 645h2M295 337h2M148 647h2M241 667h2M495 316h2M481 307h2M256 538h2M671 692h2M347 537h2M952 780h2M869 689h2M891 714h2M352 542h2M509 459h2M826 721h2M317 414h2M984 207h2M1092 648h2M729 629h2M419 760h2M438 210h2M887 654h2M572 750h2M65 500h2M33 742h2M211 329h2M41 290h2M501 437h2M689 555h2M148 560h2M439 550h2M223 314h2M886 610h2M575 559h2M720 853h2M377 665h2M490 699h2M480 861h2M65 370h2M555 580h2M689 344h2M564 574h2M502 288h2M961 878h2M265 211h2M261 381h2M734 324h2M806 490h2M262 632h2M543 596h2M1110 394h2M303 490h2M371 417h2M403 356h2M182 686h2M887 748h2M444 427h2M840 656h2M907 686h2M574 514h2M113 663h2M169 381h2M934 562h2M201 581h2M35 358h2M447 583h2M843 544h2M292 783h2M161 521h2M877 864h2M780 412h2M1082 444h2M1017 483h2M230 571h2M1003 583h2M333 714h2M437 793h2M333 435h2M245 613h2M607 314h2M967 342h2M44 350h2M730 522h2M130 531h2M166 441h2M545 666h2M550 322h2M530 724h2M668 673h2M396 396h2M195 639h2M482 313h2M506 254h2M820 739h2M1066 306h2M844 314h2M132 447h2M1026 327h2M425 834h2M258 309h2M187 315h2M842 571h2M91 800h2M168 785h2M683 802h2M1064 473h2M1118 819h2M616 323h2M1115 434h2M1048 451h2M699 465h2M641 586h2M635 370h2M236 325h2M1084 566h2M683 568h2M1067 766h2M353 295h2M61 822h2M204 481h2M704 358h2M800 574h2M637 433h2M589 636h2M492 370h2M632 701h2M572 857h2M1071 682h2M70 565h2M172 875h2M520 495h2M258 872h2M866 584h2M570 707h2M481 268h2M227 573h2M521 578h2M462 604h2M660 829h2M993 220h2M450 269h2M1077 736h2M409 766h2M434 503h2M183 798h2M759 603h2M166 751h2M925 766h2M1005 350h2M199 621h2M113 266h2M881 540h2M296 767h2M735 579h2M639 649h2M701 504h2M630 320h2M325 563h2M400 555h2M399 680h2M174 711h2M771 693h2M153 588h2M786 731h2M1068 449h2M290 402h2M612 836h2M667 652h2M895 801h2M1035 487h2M441 591h2M1074 518h2M124 443h2M193 761h2M993 533h2M816 799h2M116 497h2M1059 223h2M69 374h2M917 740h2M1026 249h2M999 290h2M957 383h2M899 794h2M984 250h2M513 473h2M152 326h2M955 610h2M485 300h2M77 772h2M878 679h2M216 762h2M981 412h2M321 686h2M1078 453h2M884 614h2M1035 218h2M616 375h2M155 300h2M210 735h2M652 398h2M206 767h2M399 627h2M68 746h2M793 476h2M336 378h2M354 217h2M96 263h2M278 423h2M989 338h2M933 320h2M1071 280h2M1037 272h2M1104 366h2M475 406h2M766 295h2M611 725h2M561 349h2M640 222h2M571 290h2M174 728h2M556 705h2M355 443h2M255 737h2M938 280h2M1044 339h2M424 682h2M688 793h2M466 473h2M933 509h2M446 564h2M150 285h2M332 239h2M867 336h2M1079 651h2M525 554h2M923 782h2M300 300h2M116 325h2M556 505h2M1061 315h2M153 314h2M837 539h2M935 494h2M82 452h2M680 500h2M56 821h2M701 299h2M846 289h2M120 329h2M1017 443h2M1001 423h2M377 268h2M567 490h2M1082 424h2M555 626h2M611 568h2M1030 507h2M526 524h2M1121 718h2M351 850h2M680 353h2M875 655h2M762 386h2M435 530h2M388 693h2M866 436h2M676 213h2M453 506h2M536 620h2M347 390h2M191 423h2M204 498h2M312 294h2M28 763h2M432 591h2M458 323h2M980 469h2M74 408h2M360 784h2M1028 239h2M1041 629h2M466 673h2M226 602h2M368 829h2M568 819h2M845 297h2M726 745h2M322 387h2M743 777h2M25 286h2M688 743h2M417 404h2M123 823h2M75 824h2M550 653h2M1103 771h2M139 783h2M209 636h2M419 385h2M212 307h2M162 825h2M83 241h2M694 533h2M1098 634h2M739 427h2M926 634h2M597 383h2M766 768h2M943 710h2M35 783h2M445 249h2M719 474h2M327 745h2M884 747h2M1102 783h2M429 703h2M871 844h2M99 768h2M293 808h2M152 298h2M1027 549h2M494 534h2M265 634h2M856 775h2M917 403h2M1002 581h2M698 225h2M693 310h2M1014 637h2M396 330h2M292 302h2M992 231h2M545 401h2M1020 314h2M148 464h2M1035 552h2M236 487h2M757 433h2M618 668h2M255 477h2M562 554h2M919 466h2M909 441h2M713 269h2M635 426h2M589 364h2M312 707h2M942 223h2M289 224h2M580 741h2M491 744h2M340 327h2M675 596h2M55 584h2M1102 859h2M610 609h2M989 364h2M210 504h2M715 871h2M381 439h2M660 600h2M67 441h2M956 715h2M251 441h2M462 848h2M136 506h2M825 841h2M347 610h2M773 436h2M375 721h2M917 523h2M299 351h2M499 578h2M335 227h2M311 376h2M639 535h2M216 841h2M774 807h2M480 608h2M900 812h2M333 686h2M219 616h2M1113 603h2M654 674h2M42 553h2M1003 781h2M894 712h2M998 789h2M244 596h2M94 764h2M962 645h2M511 387h2M239 492h2M482 601h2M823 605h2M884 501h2M725 363h2M444 268h2M756 795h2M859 566h2M861 816h2M44 844h2M463 524h2M243 516h2M377 669h2M1120 359h2M1045 313h2M712 273h2M344 306h2M953 804h2M1120 559h2M1002 431h2M1021 864h2M478 700h2M597 609h2M832 746h2M642 742h2M1046 475h2M125 461h2M233 878h2M139 283h2M360 857h2M671 672h2M1106 465h2M334 616h2M172 292h2M1027 341h2M89 467h2M1077 349h2M658 420h2M495 292h2M773 496h2M903 326h2M603 314h2M805 631h2M902 227h2M734 823h2M218 528h2M596 623h2M896 325h2M735 368h2M960 320h2M1062 587h2M366 878h2M313 768h2M105 424h2M1105 864h2M404 840h2M524 548h2M133 809h2M1100 731h2M956 504h2M838 535h2M556 531h2M113 810h2M1024 339h2M589 622h2M1064 816h2M267 219h2M174 583h2M217 391h2M549 384h2M221 818h2M336 783h2M783 471h2M700 807h2M877 340h2M322 380h2M199 690h2M328 592h2M433 614h2M1022 593h2M658 307h2M856 661h2M63 550h2M485 218h2M550 684h2M510 645h2M148 528h2M740 604h2M513 517h2M169 510h2M407 636h2M1007 643h2M922 706h2M934 237h2M74 620h2M30 519h2M106 363h2M238 800h2M978 502h2M190 219h2M601 209h2M552 760h2M162 661h2M228 697h2M166 420h2M474 495h2M107 869h2M255 421h2M1110 559h2M864 606h2M932 548h2M980 721h2M775 727h2M798 555h2M481 786h2M117 517h2M274 255h2M697 221h2M636 252h2M298 227h2M844 462h2M936 694h2M236 206h2M122 707h2M635 860h2M908 301h2M235 651h2M87 493h2M745 540h2M990 817h2M86 216h2M1119 644h2M111 742h2M217 439h2M922 325h2M478 354h2M278 810h2M517 401h2M163 343h2M571 766h2M1064 455h2M1073 318h2M919 734h2M1034 383h2M818 499h2M914 423h2M585 726h2M758 686h2M684 586h2M560 758h2M514 272h2M869 561h2M404 757h2M250 825h2M570 440h2M933 340h2M943 315h2M757 637h2M823 403h2M671 578h2M691 220h2M974 743h2M941 726h2M673 398h2M768 731h2M1036 800h2M521 445h2M525 523h2M400 724h2M866 277h2M498 855h2M402 355h2M496 868h2M509 451h2M1011 425h2M471 536h2M730 709h2M1113 455h2M1027 658h2M851 470h2M1004 700h2M629 643h2M842 760h2M312 278h2M587 632h2M419 259h2M1111 584h2M374 763h2M953 265h2M570 627h2M270 633h2M340 560h2M467 497h2M312 638h2M662 479h2M458 632h2M987 548h2M836 483h2M876 284h2M113 327h2M353 823h2M1086 563h2M63 785h2M695 345h2M882 358h2M801 822h2M437 253h2M744 866h2M835 572h2M761 497h2M548 687h2M87 403h2M481 855h2M997 276h2M941 744h2M263 486h2M462 606h2M726 649h2M942 482h2M592 473h2M173 789h2M598 801h2M623 510h2M244 552h2M418 790h2M883 232h2M55 758h2M110 687h2M194 762h2M872 292h2M488 531h2M415 549h2M221 737h2M899 401h2M169 638h2M106 380h2M602 490h2M1074 826h2M108 764h2M519 720h2M818 585h2M865 517h2M675 461h2M677 292h2M534 480h2M29 498h2M726 703h2M1006 578h2M1033 820h2M650 573h2M498 773h2M876 642h2M910 335h2M103 380h2M102 720h2M1063 784h2M937 471h2M704 489h2M888 211h2M515 474h2M493 294h2M611 610h2M362 749h2M1070 264h2M877 840h2M750 275h2M709 867h2M256 525h2M1064 410h2M819 565h2M1070 778h2M907 332h2M606 728h2M361 427h2M679 722h2M1074 336h2M520 558h2M756 524h2M360 449h2M1088 405h2M153 439h2M47 726h2M403 746h2M884 514h2M492 246h2M700 552h2M796 649h2M757 511h2M1091 681h2M609 346h2M1084 295h2M1110 722h2M833 870h2M28 493h2M355 461h2M1080 685h2M464 855h2M830 873h2M457 681h2M612 389h2M815 669h2M719 675h2M337 679h2M1055 558h2M203 835h2M186 665h2M726 850h2M860 656h2M988 611h2M1077 744h2M1001 836h2M808 575h2M978 557h2M723 247h2M844 784h2M966 214h2M1114 494h2M798 474h2M646 733h2M947 820h2M308 329h2M665 438h2M644 564h2M118 831h2M88 212h2M148 271h2M279 717h2M172 857h2M653 445h2M308 502h2M946 600h2M1049 396h2M581 878h2M610 733h2M25 420h2M935 211h2M615 726h2M818 536h2M187 714h2M508 290h2M897 824h2M287 384h2M224 479h2M800 312h2M832 860h2M487 438h2M326 369h2M649 504h2M913 799h2M874 446h2M524 426h2M380 589h2M540 507h2M448 804h2M1048 795h2M48 582h2M177 287h2M1080 393h2M1020 753h2M997 342h2M874 707h2M833 601h2M355 638h2M330 577h2M1004 274h2M470 646h2M1099 377h2M977 719h2M246 549h2M32 719h2M315 215h2M1111 627h2M271 402h2M313 698h2M146 667h2M1039 351h2M1038 724h2M282 838h2M816 248h2M788 477h2M272 627h2M420 807h2M907 349h2M72 775h2M262 593h2M611 700h2M1054 796h2M811 764h2M418 736h2M515 392h2M721 550h2M905 274h2M35 563h2M172 870h2M146 450h2M124 382h2M572 373h2M359 865h2M723 520h2M86 629h2M907 421h2M127 768h2M1036 220h2M352 402h2M1009 363h2M213 445h2M558 547h2M925 658h2M1113 371h2M252 780h2M623 782h2M45 408h2M157 488h2M699 245h2M528 245h2M264 635h2M735 251h2M1063 466h2M1015 733h2M748 674h2M928 386h2M646 596h2M1092 383h2M439 514h2M149 519h2M433 815h2" stroke="#444442" stroke-width="2" fill="none" shape-rendering="crispEdges" transform="translate(0 1)"/>
<path d="M217 580h2M482 851h2M151 796h2M395 311h2M446 714h2M668 682h2M533 390h2M524 289h2M174 326h2M888 246h2M183 777h2M667 554h2M158 268h2M659 868h2M937 497h2M944 617h2M875 573h2M323 635h2M781 830h2M677 334h2M1080 838h2M169 418h2M795 358h2M541 561h2M1106 511h2M211 473h2M481 751h2M1054 543h2M28 696h2M847 292h2M81 360h2M235 745h2M692 471h2M749 675h2M1052 339h2M335 742h2M994 839h2M692 736h2M1013 314h2M691 833h2M1073 410h2M592 669h2M1117 695h2M275 364h2M964 657h2M113 745h2M438 525h2M940 314h2M138 292h2M805 724h2M770 542h2M596 720h2M436 460h2M638 517h2M501 292h2M1108 364h2M822 539h2M1060 348h2M110 342h2M63 847h2M168 721h2M445 442h2M613 253h2M431 285h2M648 842h2M228 428h2M1027 503h2M456 282h2M209 351h2M425 218h2M844 773h2M866 667h2M634 467h2M557 621h2M1050 715h2M382 556h2M438 226h2M762 334h2M1055 747h2M895 690h2M336 740h2M961 293h2M282 444h2M101 866h2M647 337h2M540 746h2M169 513h2M521 692h2M84 627h2M422 716h2M629 317h2M875 259h2M945 527h2M996 237h2M114 474h2M646 360h2M860 272h2M94 699h2M887 716h2M788 466h2M128 400h2M103 819h2M695 624h2M786 395h2M89 713h2M232 610h2M341 860h2M130 525h2M62 578h2M428 606h2M837 297h2M669 260h2M819 294h2M896 604h2M777 663h2M930 722h2M108 247h2M291 290h2M160 834h2M1111 255h2M761 669h2M1092 799h2M239 464h2M794 583h2M386 836h2M665 207h2M620 836h2M910 633h2M1025 438h2M647 314h2M53 455h2M742 814h2M933 822h2M433 736h2M1063 869h2M793 653h2M977 288h2M440 369h2M802 851h2M79 653h2M459 606h2M254 315h2M308 864h2M112 275h2M204 852h2M603 255h2M614 839h2M123 756h2M468 299h2M364 318h2M94 562h2M947 773h2M923 469h2M971 864h2M693 823h2M233 374h2M919 433h2M315 469h2M853 211h2M521 646h2M887 440h2M493 391h2M666 472h2M957 226h2M863 736h2M354 410h2M401 607h2M886 849h2M985 863h2M496 479h2M1018 644h2M731 854h2M1119 377h2M923 325h2M362 758h2M681 685h2M763 857h2M83 227h2M461 631h2M418 530h2M637 336h2M856 764h2M413 692h2M148 718h2M381 309h2M658 781h2M66 647h2M136 715h2M268 637h2M53 602h2M459 361h2M61 488h2M521 667h2M1045 677h2M545 259h2M55 872h2M672 582h2M923 687h2M264 577h2M149 842h2M705 826h2M56 360h2M585 766h2M1048 561h2M199 758h2M504 522h2M448 466h2M840 799h2M1001 724h2M618 577h2M242 586h2M731 493h2M156 818h2M838 328h2M36 409h2M636 809h2M476 285h2M1076 264h2M626 353h2M1064 555h2M187 295h2M446 346h2M785 794h2M34 570h2M272 571h2M1076 232h2M206 435h2M663 462h2M1035 805h2M134 538h2M771 317h2M911 411h2M538 330h2M650 561h2M980 810h2M586 455h2M955 830h2M437 767h2M776 677h2M411 730h2M513 537h2M737 656h2M925 568h2M746 349h2M439 837h2M597 842h2M825 744h2M122 468h2M1043 513h2M664 757h2M1050 616h2M728 748h2M1072 418h2M148 851h2M243 567h2M30 520h2M1044 772h2M569 868h2M1078 353h2M431 626h2M686 353h2M475 611h2M115 369h2M522 605h2M260 549h2M344 453h2M854 591h2M952 340h2M852 828h2M823 294h2M85 581h2M845 566h2M260 483h2M121 456h2M477 493h2M931 554h2M1055 849h2M446 644h2M412 250h2M559 384h2M520 212h2M936 342h2M315 807h2M518 547h2M371 364h2M447 323h2M428 319h2M617 378h2M185 347h2M778 396h2M801 394h2M779 345h2M347 512h2M189 351h2M605 279h2M138 732h2M923 215h2M985 293h2M902 753h2M341 616h2M191 267h2M703 829h2M633 784h2M728 749h2M786 774h2M877 574h2M409 749h2M963 437h2M256 731h2M189 623h2M1055 769h2M259 847h2M788 731h2M1099 571h2M750 403h2M804 353h2M537 757h2M662 340h2M584 271h2M561 571h2M897 854h2M724 577h2M937 611h2M644 378h2M656 464h2M589 469h2M72 374h2M573 448h2M603 719h2M141 338h2M410 483h2M694 233h2M1020 621h2M710 712h2M339 822h2M702 441h2M765 741h2M767 360h2M209 234h2M1052 415h2M397 471h2M1046 424h2M79 316h2M864 590h2M67 474h2M952 423h2M311 510h2M333 720h2M370 681h2M720 863h2M906 313h2M1023 345h2M1050 321h2M889 531h2M514 828h2M546 831h2M671 672h2M26 690h2M800 569h2M156 608h2M570 833h2M684 279h2M994 562h2M1107 578h2M774 450h2M967 387h2M864 363h2M772 571h2M253 666h2M1091 449h2M436 206h2M556 265h2M390 519h2M922 299h2M786 250h2M907 869h2M77 316h2M972 679h2M1073 215h2M108 507h2M477 284h2M205 426h2M137 769h2M1071 636h2M131 418h2M790 681h2M959 775h2M956 621h2M393 220h2M628 422h2M483 469h2M677 780h2M621 434h2M456 877h2M645 818h2M91 800h2M423 361h2M635 277h2M956 303h2M256 371h2M94 246h2M224 628h2M295 631h2M1041 482h2M528 373h2M1121 249h2M605 619h2M830 845h2M249 504h2M272 292h2M528 280h2M197 678h2M430 430h2M867 300h2M1075 512h2M1113 876h2M509 710h2M127 607h2M833 847h2M203 439h2M640 706h2M580 397h2M930 623h2M538 566h2M231 771h2M766 518h2M1035 578h2M1074 361h2M380 809h2M77 636h2M804 710h2M311 411h2M1091 380h2M663 260h2M1051 624h2M827 577h2M49 248h2M650 568h2M405 352h2M1092 629h2M851 425h2M480 450h2M162 823h2M1067 485h2M217 574h2M91 246h2M484 507h2M721 544h2M496 429h2M791 270h2M585 297h2M540 279h2M908 670h2M422 284h2M568 412h2M631 229h2M360 784h2M240 251h2M287 317h2M68 403h2M113 414h2M687 552h2M238 306h2M959 791h2M925 275h2M844 873h2M267 715h2M806 270h2M484 855h2M115 775h2M1108 372h2M172 236h2M200 720h2M183 261h2M40 779h2M275 871h2M201 765h2M1036 826h2M859 831h2M145 237h2M137 390h2M667 641h2M526 623h2M267 386h2M922 835h2M184 271h2M1036 869h2M833 624h2M379 661h2M452 565h2M712 490h2M365 741h2M250 676h2M514 552h2M142 279h2M480 701h2M467 782h2M1079 231h2M988 238h2M504 716h2M778 878h2M417 517h2M1002 588h2M1032 423h2M25 364h2M997 781h2M481 360h2M639 875h2M1111 806h2M781 740h2M396 467h2M1097 469h2M175 264h2M991 423h2M998 554h2M846 343h2M501 585h2M761 595h2M705 796h2M753 559h2M1011 224h2M623 769h2M359 272h2M431 221h2M1120 628h2M711 281h2M698 555h2M984 442h2M216 689h2M518 470h2M892 740h2M671 741h2M125 538h2M768 693h2M96 513h2M831 302h2M438 338h2M666 382h2M724 398h2M25 443h2M642 589h2M309 761h2M970 425h2M659 859h2M663 566h2M241 820h2M280 876h2M96 678h2M910 230h2M1049 217h2M1059 229h2M319 362h2M304 822h2M36 554h2M363 448h2M548 443h2M384 443h2M383 412h2M249 679h2M967 381h2M864 571h2M1067 354h2M977 792h2M1001 568h2M847 648h2M635 366h2M33 354h2M693 810h2M345 768h2M587 578h2M65 564h2M1114 538h2M546 602h2M244 353h2M420 246h2M336 565h2M145 662h2M93 656h2M72 821h2M715 611h2M766 630h2M33 799h2M693 531h2M627 806h2M591 322h2M916 658h2M550 289h2M783 416h2M593 673h2M675 616h2M293 566h2M404 345h2M665 267h2M810 443h2M353 739h2M767 698h2M170 416h2M510 319h2M666 788h2M741 809h2M395 219h2M274 479h2M1080 537h2M811 620h2M80 274h2M900 844h2M1054 786h2M870 680h2M214 694h2M125 669h2M514 244h2M656 281h2M940 456h2M144 497h2M234 739h2M369 440h2M981 209h2M533 478h2M845 632h2M418 475h2M229 597h2M228 713h2M285 231h2M403 798h2M477 802h2M776 622h2M295 299h2M907 446h2M343 472h2M804 300h2M751 728h2M1054 337h2M404 250h2M938 589h2M1000 460h2M681 424h2M950 572h2M201 575h2M910 876h2M59 485h2M992 317h2M1022 250h2M336 589h2M96 845h2M691 734h2M517 592h2M491 819h2M970 423h2M371 308h2M757 549h2M197 838h2M306 542h2M356 408h2M992 408h2M379 275h2M1052 345h2M668 503h2M1119 343h2M641 411h2M480 659h2M361 266h2M243 288h2M92 812h2M655 299h2M1016 833h2M318 597h2M600 483h2M1069 562h2M1017 233h2M856 366h2M430 875h2M534 567h2M307 771h2M675 432h2M420 656h2M470 519h2M1007 272h2M1073 657h2M859 422h2M52 471h2M443 352h2M929 538h2M287 255h2M780 389h2M833 857h2M1008 867h2M800 608h2M595 318h2M512 331h2M80 360h2M665 254h2M224 762h2M861 518h2M901 271h2M691 512h2M587 859h2M1056 504h2M442 344h2M999 863h2M610 618h2M1074 551h2M192 452h2M401 764h2M343 787h2M517 230h2M228 679h2M884 801h2M144 587h2M68 849h2M841 364h2M421 502h2M692 254h2M675 318h2M453 710h2M1009 627h2M308 257h2M891 707h2M560 625h2M159 717h2M234 715h2M910 722h2M75 324h2M324 844h2M1003 517h2M1117 252h2M525 237h2M805 437h2M691 835h2M299 516h2M397 654h2M540 825h2M400 344h2M686 306h2M530 670h2M132 625h2M499 720h2M277 776h2M197 607h2M1003 832h2M1087 323h2M940 629h2M376 451h2M670 711h2M1071 417h2M850 846h2M299 816h2M811 442h2M500 792h2M85 809h2M916 870h2M991 206h2M555 505h2M932 845h2M446 497h2M632 562h2M379 629h2M725 230h2M537 294h2M774 744h2M1045 588h2M143 402h2M497 641h2M1019 358h2M222 735h2M646 428h2M1054 326h2M967 435h2M675 576h2M113 510h2M410 271h2M193 747h2M923 815h2M82 857h2M915 635h2M111 620h2M1072 753h2M447 352h2M111 558h2M265 548h2M1090 734h2M516 780h2M785 510h2M334 258h2M610 682h2M291 308h2M536 721h2M375 519h2M546 805h2M923 423h2M538 386h2M761 677h2M306 387h2M734 261h2M71 374h2M265 613h2M807 564h2M362 850h2M303 772h2M201 224h2M247 724h2M348 624h2M343 761h2M138 354h2M736 557h2M1111 619h2M754 773h2M1108 495h2M394 626h2M235 348h2M930 862h2M486 216h2M918 335h2M947 338h2M1108 545h2M39 707h2M181 296h2M185 661h2M1111 823h2M871 332h2M732 335h2M639 793h2M685 396h2M580 584h2M385 229h2M154 678h2M667 431h2M466 624h2M1117 476h2M763 280h2M145 448h2M171 751h2M319 285h2M508 388h2M1115 487h2M721 691h2M538 624h2M75 761h2M510 453h2M178 860h2M848 688h2M942 394h2M240 281h2M287 291h2M798 346h2M974 500h2M220 820h2M481 816h2M919 757h2M1000 390h2M971 851h2M80 744h2M453 572h2M58 856h2M949 350h2M976 526h2M1113 850h2M478 329h2M1087 630h2M1041 409h2M446 667h2M718 603h2M495 623h2M446 243h2M281 840h2M490 841h2M644 429h2M353 212h2M1059 522h2M1034 208h2M1051 670h2M402 839h2M413 849h2M557 620h2M454 711h2M678 877h2M217 794h2M782 452h2M791 611h2M891 779h2M357 757h2M899 628h2M565 713h2M987 373h2M1049 489h2M717 603h2M679 534h2M869 711h2M1088 247h2M507 548h2M98 352h2M605 590h2M178 630h2M127 373h2M362 451h2M305 836h2M1081 334h2M748 333h2M993 455h2M384 474h2M713 450h2M37 391h2M538 593h2M143 583h2M914 680h2M805 822h2M658 278h2M639 551h2M929 475h2M207 677h2M89 515h2M1026 702h2M87 588h2M809 668h2M361 403h2M868 555h2M927 313h2M191 534h2M379 758h2M318 710h2M693 467h2M681 255h2M450 740h2M399 281h2M989 337h2M288 599h2M105 468h2M182 791h2M71 845h2M720 489h2M177 759h2M526 276h2M1104 579h2M410 578h2M301 568h2M973 541h2M592 875h2M324 748h2M306 252h2M324 472h2M973 651h2M1076 400h2M675 755h2M271 493h2M1032 627h2M960 803h2M750 836h2M288 272h2M902 794h2M627 796h2M344 704h2M308 238h2M759 321h2M101 636h2M299 372h2M255 780h2M178 806h2M518 681h2M1064 319h2M868 394h2M253 659h2M214 745h2M400 577h2M448 549h2M1014 651h2M110 484h2M688 384h2M658 769h2M396 827h2M1071 779h2M178 749h2M667 292h2M513 621h2M38 694h2M1001 777h2M556 809h2M769 209h2M575 479h2M987 502h2M1102 615h2M1046 736h2M349 553h2M589 285h2M1110 667h2M204 210h2M184 461h2M1104 283h2M110 293h2M299 478h2M288 558h2M671 761h2M131 837h2M817 729h2M888 529h2M270 392h2M780 570h2M575 792h2M587 394h2M536 428h2M993 783h2M341 332h2M1033 448h2M324 508h2M1079 418h2M1033 770h2M35 606h2M332 420h2M1065 803h2M150 677h2M961 213h2M42 250h2M902 328h2M873 606h2M294 874h2M605 639h2M321 839h2M184 439h2M162 369h2M227 769h2M283 725h2M282 245h2M112 691h2M1087 338h2M879 871h2M1081 427h2M256 237h2M299 354h2M1022 517h2M138 219h2M602 634h2M194 284h2M882 352h2M806 643h2M638 794h2M108 300h2M185 282h2M517 758h2M758 464h2M598 612h2M433 455h2M498 222h2M1096 611h2M552 439h2M470 446h2M690 219h2M745 622h2M953 857h2M172 313h2M756 737h2M672 550h2M205 523h2M522 635h2M299 273h2M942 417h2M980 815h2M155 756h2M148 730h2M512 267h2M186 785h2M280 215h2M41 384h2M967 270h2M914 486h2M798 878h2M334 745h2M167 615h2M1065 548h2M825 262h2M682 758h2M92 556h2M571 600h2M166 458h2M303 483h2M685 532h2M313 489h2M196 633h2M361 662h2M118 587h2M606 804h2M1106 279h2M169 636h2M295 689h2M110 274h2M30 505h2M477 409h2M790 350h2M39 556h2M1005 548h2M455 590h2M797 211h2M912 825h2M463 576h2M943 637h2M344 428h2M1047 679h2M109 596h2M694 513h2M1035 805h2M1099 283h2M188 778h2M1110 863h2M940 861h2M403 255h2M131 538h2M562 822h2M763 400h2M181 770h2M874 767h2M892 214h2M884 837h2M114 640h2M123 533h2M849 625h2M1071 723h2M641 621h2M751 398h2M249 798h2M523 324h2M515 867h2M437 677h2M131 399h2M538 497h2M765 285h2M174 326h2M683 416h2M279 775h2M261 425h2M304 384h2M1078 537h2M1014 356h2M918 239h2M1085 313h2M318 636h2M631 282h2M263 664h2M898 827h2M119 229h2M639 245h2M594 334h2M212 519h2M647 695h2M636 413h2M183 663h2M118 325h2M311 878h2M613 690h2M227 547h2M244 357h2M432 848h2M836 838h2M30 314h2M1092 742h2M423 535h2M718 546h2M739 836h2M76 582h2M969 330h2M128 456h2M332 478h2M468 638h2M1019 611h2M68 369h2M1017 289h2M697 742h2M858 596h2M902 426h2M378 632h2M395 497h2M752 654h2M388 563h2M818 686h2M176 819h2M688 784h2M842 557h2M699 692h2M1100 615h2M385 468h2M659 752h2M1086 596h2M375 657h2M729 446h2M1095 582h2M387 645h2M502 745h2M681 583h2M915 818h2M447 560h2M750 509h2M994 266h2M1081 433h2M974 853h2M195 684h2M1060 678h2M395 376h2M800 377h2M244 361h2M766 546h2M251 411h2M121 331h2M191 349h2M147 600h2M150 670h2M311 514h2M504 521h2M926 742h2M1105 457h2M1058 634h2M710 342h2M805 792h2M282 786h2M1120 247h2M886 557h2M469 678h2M1083 230h2M1095 311h2M602 492h2M522 742h2M629 582h2M52 772h2M349 719h2M800 312h2M244 441h2M63 647h2M461 623h2M291 615h2M80 431h2M373 394h2M310 533h2M918 637h2M372 474h2M147 856h2M1049 227h2M291 706h2M531 869h2M477 682h2M106 518h2M217 760h2M873 357h2M1040 813h2M621 536h2M831 474h2M249 635h2M873 445h2M76 647h2M416 393h2M56 579h2M265 300h2M1108 551h2M135 877h2M1058 295h2M141 822h2M744 461h2M785 486h2M1091 582h2M233 475h2M44 834h2M85 393h2M986 539h2M572 541h2M798 355h2M677 574h2M784 444h2M229 279h2M155 586h2M878 717h2M845 217h2M1010 741h2M220 395h2M906 518h2M567 348h2M771 240h2M1106 481h2M871 615h2M470 837h2M143 720h2M75 629h2M539 676h2M1108 278h2M632 388h2M1009 781h2M205 310h2M295 744h2M444 604h2M481 790h2M662 446h2M544 687h2M320 216h2M274 444h2M928 712h2M852 851h2M940 488h2M951 791h2M404 751h2M262 512h2M602 671h2M592 302h2M666 590h2M450 321h2M411 680h2M510 633h2M498 313h2M841 600h2M850 651h2M480 436h2M474 861h2M379 770h2M697 597h2M893 758h2M699 581h2M970 702h2M919 620h2M367 286h2M384 608h2M633 261h2M208 681h2M628 594h2M934 543h2M339 863h2M320 763h2M727 550h2M948 826h2M1121 234h2M157 586h2M610 788h2M705 418h2M893 317h2M559 399h2M909 565h2M138 734h2M940 477h2M518 664h2M135 243h2M913 827h2M207 724h2M675 808h2M201 310h2M358 333h2M854 816h2M576 372h2M329 685h2M530 441h2M899 842h2M463 469h2M295 731h2M270 550h2M548 586h2M510 707h2M529 651h2M26 556h2M921 487h2M800 810h2M289 822h2M750 491h2M945 457h2M400 701h2M827 363h2M411 320h2M567 800h2M1109 319h2M846 875h2M62 525h2M193 412h2M450 659h2M103 433h2M479 737h2M335 786h2M1072 219h2M639 390h2M693 313h2M843 406h2M552 542h2M83 446h2M599 267h2M933 595h2M436 234h2M1115 788h2M492 468h2M105 530h2M705 817h2M106 234h2M167 338h2M172 550h2M889 825h2M239 349h2M379 423h2M35 566h2M33 433h2M241 350h2M265 327h2M597 402h2M1042 232h2M732 286h2M660 323h2M482 838h2M1026 539h2M949 476h2M308 766h2M1117 790h2M1109 529h2M1079 435h2M221 606h2M278 636h2M856 357h2M488 846h2M372 300h2M381 454h2" stroke="#52524e" stroke-width="2" fill="none" shape-rendering="crispEdges" transform="translate(0 1)"/>
<path d="M123 280h2M120 776h2M656 779h2M1113 643h2M881 374h2M959 276h2M594 346h2M135 673h2M481 833h2M424 451h2M84 234h2M270 603h2M310 650h2M1051 452h2M1083 636h2M63 656h2M592 249h2M460 516h2M396 482h2M290 638h2M649 749h2M321 250h2M1057 788h2M57 804h2M31 673h2M995 464h2M967 711h2M979 683h2M296 823h2M233 258h2M308 865h2M779 470h2M578 552h2M826 746h2M248 868h2M105 207h2M663 593h2M866 459h2M32 815h2M158 230h2M978 601h2M539 646h2M399 214h2M508 541h2M506 757h2M997 442h2M441 217h2M771 677h2M353 861h2M963 389h2M303 232h2M1032 500h2M743 831h2M123 509h2M577 617h2M986 689h2M1111 212h2M120 273h2M769 410h2M1118 273h2M94 241h2M296 306h2M778 534h2M1056 693h2M918 737h2M350 496h2M190 708h2M1113 814h2M572 514h2M334 357h2M50 614h2M46 604h2M738 309h2M361 338h2M312 749h2M950 560h2M210 767h2M38 370h2M1044 509h2M118 544h2M1101 773h2M962 846h2M780 348h2M1094 246h2M343 692h2M44 330h2M205 429h2M365 354h2M360 850h2M952 484h2M795 822h2M111 501h2M204 755h2M760 618h2M462 473h2M940 813h2M293 466h2M121 470h2M1076 868h2M321 531h2M789 349h2M632 548h2M57 658h2M395 347h2M393 740h2M1089 623h2M138 736h2M526 534h2M806 796h2M150 504h2M886 817h2M845 452h2M711 652h2M681 616h2M886 612h2M107 241h2M161 826h2M998 481h2M285 628h2M331 633h2M252 594h2M920 735h2M76 555h2M577 763h2M460 334h2M765 718h2M615 335h2M851 681h2M972 460h2M907 408h2M392 784h2M611 249h2M252 244h2M677 421h2M831 836h2M969 621h2M81 231h2M208 246h2M90 831h2M305 512h2M254 432h2M724 217h2M1026 250h2M939 227h2M925 322h2M398 841h2M94 780h2M220 410h2M227 577h2M601 449h2M527 564h2M715 536h2M983 571h2M902 275h2M317 748h2M209 572h2M553 695h2M229 877h2M492 616h2M459 537h2M56 273h2M345 694h2M572 345h2M131 420h2M763 253h2M745 305h2M505 412h2M740 426h2M797 452h2M803 446h2M482 833h2M567 474h2M315 273h2M377 362h2M1004 384h2M520 477h2M287 639h2M619 838h2M169 287h2M701 602h2M955 262h2M858 257h2M533 595h2M435 420h2M350 355h2M501 802h2M689 767h2M464 361h2M1017 492h2M988 483h2M134 706h2M375 363h2M1075 269h2M465 839h2M153 409h2M128 580h2M916 601h2M262 275h2M720 815h2M58 319h2M110 590h2M677 724h2M955 784h2M794 740h2M61 264h2M941 524h2M600 848h2M520 504h2M634 598h2M336 491h2M988 778h2M835 748h2M556 666h2M962 850h2M452 494h2M87 434h2M379 235h2M488 262h2M364 495h2M429 407h2M85 671h2M340 578h2M811 370h2M1119 278h2M970 702h2M828 785h2M517 430h2M1005 312h2M301 647h2M299 464h2M994 844h2M692 486h2M514 556h2M239 242h2M471 500h2M365 497h2M208 367h2M253 460h2M364 498h2M422 430h2M991 475h2M294 282h2M322 602h2M684 248h2M924 349h2M468 403h2M356 450h2M189 805h2M130 652h2M169 501h2M264 850h2M427 584h2M879 696h2M129 363h2M416 669h2M652 262h2M1062 739h2M945 531h2M1001 634h2M1114 824h2M380 602h2M403 824h2M1075 552h2M1075 686h2M881 263h2M729 216h2M50 626h2M525 865h2M131 381h2M804 653h2M378 533h2M719 687h2M694 232h2M480 824h2M135 300h2M467 485h2M201 277h2M491 371h2M38 248h2M774 614h2M474 554h2M215 850h2M327 255h2M34 718h2M1079 211h2M349 793h2M1025 487h2M194 709h2M553 490h2M1116 845h2M877 686h2M973 698h2M389 527h2M430 762h2M1064 326h2M440 389h2M894 319h2M901 578h2M36 453h2M756 453h2M557 290h2M186 639h2M345 846h2M264 323h2M930 865h2M449 445h2M1099 518h2M293 553h2M990 806h2M517 875h2M102 738h2M383 819h2M786 503h2M586 496h2M376 727h2M168 387h2M975 591h2M220 651h2M981 653h2M919 399h2M1056 703h2M228 223h2M542 769h2M232 267h2M871 322h2M920 804h2M389 622h2M419 687h2M629 519h2M927 605h2M329 485h2M154 310h2M1061 225h2M465 807h2M673 726h2M551 832h2M187 469h2M978 243h2M761 480h2M50 657h2M90 333h2M209 792h2M970 684h2M937 699h2M120 852h2M101 827h2M217 262h2M1034 588h2M681 267h2M1107 826h2M733 363h2M943 385h2M1106 483h2M966 725h2M318 704h2M1093 541h2M829 354h2M942 488h2M602 683h2M520 807h2M917 561h2M603 398h2M689 662h2M983 500h2M76 487h2M1042 589h2M462 643h2M733 511h2M337 746h2M690 241h2M953 561h2M935 647h2M741 780h2M800 290h2M45 795h2M820 851h2M305 857h2M1106 384h2M1005 552h2M840 418h2M234 401h2M1045 804h2M303 710h2M1074 619h2M1036 797h2M158 541h2M1049 556h2M589 663h2M649 619h2M458 317h2M621 492h2M1026 763h2M650 468h2M231 409h2M392 797h2M648 507h2M960 302h2M307 278h2M105 247h2M735 704h2M1063 234h2M964 666h2M432 292h2M142 355h2M861 627h2M30 300h2M932 812h2M382 211h2M80 819h2M517 585h2M283 413h2M248 231h2M824 742h2M97 367h2M173 658h2M253 697h2M505 611h2M363 748h2M287 718h2M557 455h2M58 406h2M633 283h2M230 640h2M315 743h2M189 313h2M116 512h2M172 707h2M332 566h2M455 686h2M505 727h2M128 462h2M1085 593h2M225 241h2M121 546h2M299 845h2M566 420h2M253 302h2M75 232h2M772 441h2M1082 468h2M757 461h2M207 764h2M319 392h2M155 776h2M696 392h2M119 878h2M467 351h2M240 283h2M801 274h2M1020 358h2M902 699h2M659 505h2M260 787h2M349 706h2M572 507h2M1043 470h2M275 680h2M132 821h2M292 584h2M691 698h2M888 317h2M504 457h2M539 291h2M928 299h2M205 615h2M67 420h2M958 376h2M911 231h2M274 493h2M591 248h2M177 420h2M344 774h2M51 625h2M274 621h2M780 718h2M717 749h2M56 703h2M910 876h2M224 748h2M791 626h2M874 515h2M988 576h2M738 500h2M754 362h2M604 684h2M165 839h2M780 792h2M42 852h2M565 319h2M547 671h2M417 531h2M286 538h2M294 756h2M255 758h2M762 222h2M1048 274h2M275 311h2M112 817h2M639 318h2M478 335h2M893 867h2M766 680h2M591 230h2M381 244h2M643 306h2M1081 674h2M477 525h2M214 560h2M399 620h2M647 355h2M264 856h2M1005 587h2M241 614h2M1061 795h2M406 547h2M803 344h2M239 704h2M721 391h2M765 717h2M308 478h2M529 257h2M682 870h2M215 612h2M1020 829h2M498 862h2M573 631h2M806 482h2M1015 756h2M36 713h2M988 524h2M889 574h2M660 569h2M57 574h2M212 365h2M1085 271h2M853 251h2M266 405h2M770 707h2M424 584h2M526 577h2M638 344h2M807 717h2M404 209h2M869 793h2M294 697h2M674 747h2M673 568h2M139 295h2M745 241h2M1042 613h2M713 649h2M645 542h2M1028 299h2M1077 613h2M227 687h2M205 667h2M57 441h2M411 664h2M350 298h2M262 544h2M606 578h2M72 612h2M384 404h2M651 763h2M242 528h2M341 846h2M51 614h2M764 407h2M825 836h2M890 289h2M674 637h2M976 631h2M421 353h2M613 425h2M122 443h2M422 625h2M438 532h2M980 725h2M953 318h2M158 557h2M937 482h2M204 434h2M979 639h2M501 424h2M986 377h2M854 628h2M972 340h2M330 223h2M704 394h2M606 636h2M913 579h2M885 672h2M850 296h2M456 835h2M687 581h2M310 859h2M112 582h2M337 237h2M528 366h2M405 767h2M649 650h2M1091 758h2M713 489h2M266 819h2M669 426h2M467 709h2M961 373h2M33 603h2M876 552h2M272 767h2M942 327h2M1062 718h2M626 731h2M170 390h2M1024 319h2M1083 335h2M998 533h2M595 252h2M522 273h2M249 539h2M203 316h2M204 306h2M411 517h2M1091 841h2M527 796h2M526 286h2M496 332h2M275 672h2M448 554h2M500 727h2M108 263h2M110 347h2M1025 759h2M978 820h2M973 676h2M56 270h2M306 222h2M470 373h2M928 443h2M947 462h2M394 415h2M931 404h2M521 371h2M146 855h2M587 445h2M596 566h2M769 349h2M462 624h2M307 762h2M950 263h2M305 496h2M844 255h2M171 494h2M653 481h2M448 589h2M84 698h2M893 795h2M1103 641h2M25 830h2" stroke="#3e4a4a" stroke-width="2" fill="none" shape-rendering="crispEdges" transform="translate(0 1)"/>
<path d="M25 728.9L1122 710.1M25 739.5L1122 719.9M25 751L1122 731.1M25 763.3L1122 743.6M25 777L1122 756.4M25 791.2L1122 770.4M25 807L1122 784.9M25 823.8L1122 800.5M25 842.6L1122 818.4M25 862.5L1122 836.3M25 884.5L1122 857M-3.2 729.4L-284.6 900M29.8 728.8L-235.3 900M62.7 728.3L-186 900M95.4 727.7L-136.7 900M128.1 727.1L-87.3 900M160.7 726.6L-37.9 900M193.1 726L11.5 900M225.5 725.5L60.9 900M257.8 724.9L110.4 900M289.9 724.4L159.9 900M322 723.8L209.4 900M354 723.3L258.9 900M385.8 722.7L308.4 900M417.6 722.2L358 900M449.3 721.6L407.6 900M480.9 721.1L457.2 900M512.4 720.5L506.8 900M543.8 720L556.5 900M575.1 719.5L606.1 900M606.3 718.9L655.8 900M637.4 718.4L705.6 900M668.4 717.9L755.3 900M699.3 717.3L805.1 900M730.2 716.8L854.9 900M760.9 716.3L904.7 900M791.6 715.8L954.5 900M822.1 715.2L1004.4 900M852.6 714.7L1054.3 900M883 714.2L1104.2 900M913.2 713.7L1154.1 900M943.4 713.2L1204 900M973.5 712.6L1254 900M1003.6 712.1L1304 900M1033.5 711.6L1354 900M1063.3 711.1L1404.1 900M1093.1 710.6L1454.1 900M1122.8 710.1L1504.2 900M1152.3 709.6L1554.3 900" stroke="#e9e9e9" stroke-width="1" fill="none" shape-rendering="crispEdges"/>
<g opacity="0.545">
<path d="M273 320L850 323L826.2 794L300.2 804.6Z" fill="#ff8000"/>
<path d="M272.7 319.7L363 320.2L363.7 338.6L273.7 338.2ZM273.7 337.6L334.4 337.9L335 351.3L274.4 351.1ZM274.4 350.5L335 350.7L335.6 364.1L275.1 363.9ZM508.4 351.3L523.4 351.4L523.5 364.6L508.6 364.6ZM777.6 352.3L792.2 352.4L791.7 365.5L777.1 365.4ZM805.5 352.4L820 352.5L819.4 365.6L805 365.5ZM275.1 363.3L335.6 363.5L336.2 376.8L275.9 376.6ZM508.6 364L523.5 364L523.6 377.2L508.8 377.2ZM665 364.5L679.7 364.5L679.5 377.6L664.8 377.6ZM805 364.9L819.4 365L818.9 378L804.4 377.9ZM275.9 376L336.2 376.2L336.7 389.4L276.6 389.3ZM664.8 377L679.5 377L679.2 390.1L664.6 390.1ZM804.4 377.3L818.9 377.4L818.3 390.3L803.9 390.3ZM276.6 388.7L293 388.8L293.7 402L277.3 402ZM277.3 401.4L293.7 401.4L294.4 414.6L278 414.6ZM278 414L294.4 414L295.1 427.1L278.7 427.1ZM278.7 426.5L309.5 426.5L310.2 439.6L279.4 439.6ZM279.4 439L310.2 439L310.8 452L280.1 452.1ZM280.1 451.5L325.2 451.4L325.8 464.4L280.8 464.5ZM280.8 463.9L311.4 463.8L312 476.7L281.5 476.8ZM339.5 463.7L354.4 463.7L355 476.6L340.1 476.6ZM281.5 476.2L297.7 476.2L298.3 489L282.2 489.1ZM354.4 476L383.5 475.9L383.9 488.8L354.9 488.8ZM282.2 488.5L298.3 488.4L299 501.2L282.9 501.3ZM369.1 488.2L383.9 488.2L384.4 500.9L369.6 501ZM282.9 500.7L299 500.6L299.6 513.4L283.5 513.5ZM369.6 500.4L398.5 500.3L398.9 513L370.1 513.1ZM283.5 512.9L313.9 512.8L314.5 525.5L284.2 525.6ZM370.1 512.5L384.8 512.5L385.3 525.1L370.6 525.2ZM284.2 525L314.5 524.9L315.1 537.5L284.9 537.7ZM284.9 537.1L315.1 536.9L315.7 549.5L285.6 549.7ZM285.6 549.1L301.6 549L302.2 561.6L286.2 561.7ZM286.2 561.1L302.2 561L302.8 573.5L286.9 573.6ZM286.9 573L302.8 572.9L303.5 585.4L287.6 585.5ZM287.6 584.9L303.5 584.8L304.1 597.2L288.3 597.3ZM288.3 596.7L304.1 596.6L304.7 609L288.9 609.1Z" fill="#990000"/>
<path d="M362.4 320.2L508.6 320.9L508.8 339.2L363.1 338.6ZM333.8 337.9L349.1 337.9L349.6 351.3L334.4 351.3ZM363.1 338L407.5 338.2L407.9 351.6L363.6 351.4ZM508.2 338.6L537.6 338.7L537.7 352L508.4 351.9ZM679.6 339.4L694.3 339.4L694 352.6L679.3 352.6ZM778.1 339.8L820.6 340L820 353.1L777.6 352.9ZM522.8 351.4L537.7 351.4L537.8 364.7L522.9 364.6ZM665.2 351.9L708.1 352.1L707.8 365.2L665 365.1ZM791.6 352.4L806.1 352.4L805.6 365.5L791.1 365.5ZM819.4 352.5L833.9 352.5L833.3 365.6L818.8 365.6ZM494.2 364L509.2 364L509.4 377.2L494.4 377.2ZM522.9 364L537.8 364.1L537.9 377.3L523 377.2ZM679.1 364.5L707.8 364.6L707.5 377.7L678.9 377.6ZM777.1 364.8L805.6 364.9L805 377.9L776.7 377.9ZM335.6 376.2L350.7 376.2L351.2 389.5L336.1 389.4ZM494.4 376.6L509.4 376.6L509.5 389.8L494.6 389.7ZM678.9 377L707.5 377.1L707.2 390.1L678.6 390.1ZM776.7 377.3L805 377.3L804.5 390.3L776.2 390.3ZM292.4 388.8L307.6 388.8L308.3 402L293.1 402ZM664.6 389.5L693.2 389.5L693 402.5L664.4 402.5ZM790.1 389.7L818.3 389.7L817.8 402.7L789.6 402.6ZM325.2 463.8L340.1 463.7L340.7 476.6L325.8 476.7ZM340.1 476L355 476L355.5 488.8L340.6 488.9ZM382.9 475.9L397.7 475.9L398.1 488.7L383.3 488.8ZM383.3 488.2L398.1 488.1L398.5 500.9L383.8 500.9ZM384.2 512.5L398.9 512.4L399.4 525L384.7 525.1ZM301 549L315.7 548.9L316.3 561.5L301.6 561.6Z" fill="#db0000"/>
<path d="M508 320.9L850.3 322.7L849.4 340.7L508.2 339.2ZM348.5 337.9L363.7 338L364.2 351.4L349 351.3ZM406.9 338.2L422 338.2L422.4 351.6L407.3 351.6ZM464.9 338.4L508.8 338.6L509 351.9L465.2 351.8ZM537 338.7L680.2 339.4L679.9 352.6L537.1 352ZM693.7 339.4L708.4 339.5L708.1 352.7L693.4 352.6ZM764.1 339.7L778.7 339.8L778.2 352.9L763.6 352.9ZM820 340L849.4 340.1L848.8 353.2L819.4 353.1ZM494 351.3L509 351.3L509.2 364.6L494.2 364.6ZM580 351.6L609.1 351.7L609 364.9L580 364.8ZM335 363.5L350.2 363.5L350.7 376.8L335.6 376.8ZM508.8 376.6L523.6 376.6L523.8 389.8L508.9 389.8ZM336.1 388.8L351.2 388.9L351.8 402.1L336.7 402.1ZM776.2 389.7L790.7 389.7L790.2 402.6L775.8 402.6ZM351.2 401.5L366.2 401.5L366.7 414.6L351.7 414.6ZM803.4 402L817.8 402.1L817.2 414.9L802.9 414.9ZM816.6 414.3L831 414.3L830.4 427.1L816.1 427.1ZM309.6 439L324.6 439L325.2 452L310.2 452ZM324.6 451.4L339.6 451.4L340.1 464.3L325.2 464.4ZM310.8 463.8L325.8 463.8L326.4 476.7L311.4 476.7ZM353.8 463.7L368.7 463.7L369.2 476.6L354.4 476.6ZM580 463.3L608.5 463.2L608.4 476L580 476ZM593.9 475.4L622.3 475.3L622.2 488L593.9 488.1ZM354.9 488.2L369.7 488.2L370.2 501L355.4 501ZM607.8 487.5L622.2 487.4L622.1 500L607.7 500.1ZM370.6 524.6L399.4 524.4L399.8 537.1L371 537.2ZM373.4 596L387.9 595.9L388.4 608.2L373.9 608.3ZM288.9 608.5L304.7 608.4L305.4 620.7L289.6 620.9Z" fill="#ff1e00"/>
<path d="M421.4 338.2L436.5 338.3L436.9 351.7L421.8 351.6ZM364.1 363.6L379.3 363.6L379.7 376.9L364.6 376.9ZM551.5 364.1L566.4 364.2L566.4 377.4L551.6 377.3ZM451.4 376.5L480.7 376.5L480.9 389.7L451.7 389.7ZM832.1 377.4L847.5 377.5L846.9 390.4L831.5 390.4ZM831.5 389.8L846.9 389.8L846.3 402.7L830.9 402.7ZM322.8 414L337.9 414L338.4 427.1L323.4 427.1ZM423.6 414.1L438.6 414.1L438.9 427.1L424 427.1ZM551.8 414.2L608.8 414.2L608.7 427.1L551.8 427.1ZM323.4 426.5L352.9 426.5L353.4 439.6L324 439.6ZM424 426.5L453.2 426.5L453.5 439.5L424.4 439.5ZM466.8 426.5L481.6 426.5L481.9 439.5L467.1 439.5ZM537.7 426.5L552.4 426.5L552.5 439.5L537.8 439.5ZM338.4 439L382.1 439L382.5 451.9L339 452ZM424.4 438.9L453.5 438.9L453.8 451.9L424.7 451.9ZM467.1 438.9L481.9 438.9L482.1 451.8L467.3 451.8ZM495.4 438.9L510.2 438.9L510.3 451.8L495.6 451.8ZM523.7 438.9L566.6 438.8L566.6 451.7L523.8 451.8ZM396.2 451.3L411.1 451.3L411.5 464.2L396.7 464.2ZM453.2 451.3L496.2 451.2L496.4 464.1L453.5 464.1ZM635.8 451L650.3 451L650.2 463.8L635.7 463.8ZM382.4 463.7L411.5 463.6L411.9 476.5L382.9 476.5ZM453.5 463.5L468.2 463.5L468.5 476.3L453.7 476.4ZM635.7 463.2L650.2 463.2L650 475.9L635.6 475.9ZM453.7 475.8L482.6 475.7L482.8 488.5L454 488.5ZM552.3 511.7L580.6 511.6L580.6 524.1L552.4 524.3ZM566.2 523.6L580.6 523.5L580.6 536L566.2 536.1ZM538.6 535.7L553 535.6L553.1 548.1L538.7 548.2ZM566.2 535.5L580.6 535.4L580.6 547.9L566.3 548ZM357.5 548.7L372.1 548.6L372.6 561.1L358 561.2ZM566.3 547.4L580.6 547.3L580.6 559.7L566.3 559.8ZM621.2 547L662.7 546.8L662.5 559.1L621.1 559.4ZM770.4 546.1L797.9 545.9L797.4 558.2L770 558.4ZM372 560.5L386.6 560.4L387.1 572.9L372.5 573ZM621.1 558.8L662.5 558.5L662.3 570.8L621 571.1ZM729.6 558.1L743.7 558L743.3 570.2L729.3 570.3ZM770 557.8L797.4 557.6L796.9 569.8L769.6 570ZM372.5 572.4L387.1 572.3L387.5 584.7L372.9 584.8ZM525.1 571.3L539.5 571.2L539.6 583.5L525.3 583.6ZM621 570.5L662.3 570.2L662.2 582.5L620.9 582.8ZM729.3 569.7L756.7 569.5L756.3 581.7L728.9 581.9ZM769.6 569.4L796.9 569.2L796.4 581.4L769.1 581.6ZM331 584.6L345.6 584.4L346.1 596.8L331.5 597ZM497.7 583.2L512.1 583.1L512.3 595.4L497.9 595.5ZM525.3 583L539.6 582.9L539.7 595.2L525.4 595.3ZM648 582L662.2 581.9L662 594.1L647.9 594.2ZM728.9 581.3L783.1 580.9L782.6 593L728.6 593.5ZM484.2 595L498.5 594.9L498.7 607.2L484.4 607.3ZM525.4 594.7L539.7 594.6L539.8 606.8L525.5 606.9ZM647.9 593.6L662 593.5L661.8 605.6L647.7 605.8ZM742 592.8L769.3 592.6L768.9 604.6L741.6 604.9ZM525.5 606.3L539.8 606.2L539.9 618.4L525.6 618.5ZM661.2 605L688.7 604.8L688.4 616.9L661 617.2ZM741.6 604.3L768.9 604L768.4 616.1L741.3 616.4ZM539.3 617.8L553.5 617.6L553.5 629.8L539.4 629.9ZM593.6 617.2L607.7 617.1L607.6 629.2L593.5 629.3ZM754.6 615.6L768.4 615.5L768 627.5L754.2 627.6ZM794.4 615.2L835.5 614.8L835 626.8L793.9 627.2ZM347.1 631.3L361.6 631.2L362.1 643.4L347.6 643.5ZM443.7 630.3L458.1 630.2L458.3 642.3L444 642.4ZM593.5 628.7L607.6 628.6L607.6 640.6L593.5 640.8ZM754.2 627L835 626.2L834.4 638.1L753.8 639ZM539.4 640.8L553.6 640.6L553.7 652.7L539.5 652.8ZM580 640.3L594.1 640.2L594.1 652.2L580 652.3ZM753.8 638.4L767.6 638.2L767.2 650.1L753.4 650.3ZM780.2 638.1L820.3 637.6L819.8 649.5L779.8 650ZM526 652.4L540.1 652.2L540.2 664.2L526.1 664.4ZM740.2 649.8L754 649.7L753.6 661.5L739.8 661.7ZM806.1 649.1L819.8 648.9L819.2 660.7L805.5 660.9ZM471.9 664.4L486.1 664.3L486.3 676.2L472.1 676.4ZM512.6 663.9L526.7 663.8L526.8 675.7L512.7 675.9ZM580 663.1L594.1 662.9L594 674.8L580 675ZM335.4 677.6L349.8 677.4L350.3 689.4L336 689.6ZM485.7 675.6L499.8 675.5L500 687.4L485.9 687.6ZM526.4 686.4L553.8 686L553.9 697.9L526.5 698.3ZM566.6 685.9L580.6 685.7L580.6 697.5L566.7 697.7ZM778.4 683L792.1 682.8L791.6 694.5L778 694.7ZM404.8 699.4L419 699.2L419.4 711.1L405.2 711.3ZM513 697.9L553.9 697.3L554 709.1L513.2 709.7ZM566.7 697.1L620.6 696.3L620.5 708.1L566.7 708.9ZM817 693.5L831.6 693.3L831 704.9L816.5 705.1ZM309.7 712.1L324 711.9L324.5 723.8L310.3 724ZM419.1 721.7L433.3 721.5L433.6 733.3L419.5 733.5ZM685.5 728.6L699.1 728.3L698.9 739.9L685.2 740.1ZM789.6 726.9L803.2 726.7L802.7 738.2L789.2 738.4ZM433.3 743.8L447.3 743.6L447.6 755.2L433.6 755.4ZM672.1 739.8L685.8 739.5L685.6 751.1L671.9 751.3ZM789.2 737.8L802.7 737.6L802.2 749L788.7 749.2ZM815 737.3L829.4 737.1L828.8 748.6L814.4 748.8ZM339.2 756.5L353.4 756.3L353.9 767.9L339.7 768.2ZM326.2 767.8L367.4 767.1L367.8 778.7L326.8 779.5ZM632.6 762.3L646.2 762L646.1 773.5L632.4 773.7ZM658.7 761.8L672.3 761.6L672.1 773L658.5 773.3ZM326.8 778.9L367.8 778.1L368.3 789.7L327.3 790.5ZM632.4 773.1L672.1 772.4L671.9 783.8L632.3 784.6ZM749.2 771L775.5 770.5L775.1 781.8L748.8 782.3ZM354.3 789.3L381.7 788.8L382.3 803.3L354.9 803.8ZM580 785L593.7 784.7L593.7 799L580 799.3ZM723.1 782.2L775.1 781.2L774.6 795.3L722.7 796.4Z" fill="#ff9a00"/>
<path d="M435.9 338.3L451.1 338.4L451.4 351.7L436.3 351.7ZM334.4 350.7L422.4 351L422.8 364.3L335 364.1ZM436.3 351.1L451.4 351.1L451.7 364.4L436.6 364.4ZM465.2 351.2L480.2 351.2L480.5 364.5L465.5 364.5ZM551.4 351.5L566.3 351.6L566.4 364.8L551.5 364.7ZM707.5 352.1L778.2 352.3L777.7 365.4L707.2 365.2ZM349.6 363.5L364.7 363.6L365.2 376.9L350.1 376.8ZM378.7 363.6L451.7 363.8L452 377.1L379.1 376.9ZM537.2 364.1L552.1 364.1L552.2 377.3L537.3 377.3ZM565.8 364.2L580.6 364.2L580.6 377.4L565.8 377.4ZM608.4 364.3L665.6 364.5L665.4 377.6L608.4 377.5ZM707.2 364.6L777.7 364.8L777.3 377.9L706.9 377.7ZM832.7 365L848.2 365.1L847.5 378.1L832.1 378ZM350.1 376.2L452 376.5L452.3 389.7L350.6 389.5ZM480.1 376.5L495 376.6L495.2 389.7L480.3 389.7ZM523 376.6L665.4 377L665.2 390.1L523.2 389.8ZM706.9 377.1L763.4 377.2L762.9 390.2L706.6 390.1ZM818.3 377.4L832.7 377.4L832.1 390.4L817.7 390.3ZM307 388.8L322.2 388.8L322.8 402L307.7 402ZM365.1 388.9L466.6 389.1L466.9 402.2L365.6 402.1ZM494.6 389.1L665.2 389.5L665 402.5L494.8 402.3ZM706.6 389.5L762.9 389.6L762.5 402.6L706.3 402.5ZM817.7 389.7L832.1 389.8L831.5 402.7L817.2 402.7ZM293.1 401.4L337.3 401.5L337.9 414.6L293.8 414.6ZM394.5 401.5L665 401.9L664.8 414.8L394.9 414.7ZM706.3 401.9L762.5 402L762.1 414.9L706 414.9ZM830.9 402.1L846.3 402.1L845.7 414.9L830.4 414.9ZM293.8 414L323.4 414L324 427.1L294.5 427.1ZM337.3 414L352.3 414L352.9 427.1L337.8 427.1ZM394.9 414.1L424.2 414.1L424.6 427.1L395.4 427.1ZM438 414.1L552.4 414.2L552.4 427.1L438.3 427.1ZM608.2 414.2L664.8 414.2L664.6 427.1L608.1 427.1ZM692.1 414.2L762.1 414.3L761.7 427.1L691.8 427.1ZM775.3 414.3L817.2 414.3L816.7 427.1L774.9 427.1ZM308.9 426.5L324 426.5L324.6 439.6L309.6 439.6ZM352.3 426.5L424.6 426.5L425 439.5L352.8 439.6ZM452.6 426.5L467.4 426.5L467.7 439.5L452.9 439.5ZM481 426.5L538.3 426.5L538.4 439.5L481.3 439.5ZM565.9 426.5L816.7 426.5L816.1 439.3L566 439.4ZM381.5 439L425 438.9L425.3 451.9L381.9 451.9ZM452.9 438.9L467.7 438.9L467.9 451.8L453.2 451.9ZM481.3 438.9L496 438.9L496.2 451.8L481.5 451.8ZM566 438.8L844.4 438.7L843.8 451.4L566 451.7ZM410.5 451.3L453.8 451.3L454.1 464.1L410.9 464.2ZM537.9 451.1L566.6 451.1L566.6 463.9L538 464ZM621.9 451L636.4 451L636.3 463.8L621.8 463.8ZM649.7 451L843.8 450.8L843.2 463.4L649.6 463.8ZM410.9 463.6L454.1 463.5L454.3 476.4L411.3 476.5ZM538 463.4L566.6 463.3L566.7 476.1L538.1 476.2ZM621.8 463.2L636.3 463.2L636.2 475.9L621.7 475.9ZM649.6 463.2L843.2 462.8L842.6 475.4L649.4 475.9ZM311.4 476.1L326.4 476.1L327 488.9L312.1 489ZM397.1 475.9L454.3 475.8L454.6 488.5L397.5 488.7ZM524.1 475.6L580.6 475.4L580.6 488.1L524.2 488.3ZM635.6 475.3L842.6 474.8L842 487.3L635.5 488ZM297.7 488.4L355.5 488.2L356 501L298.4 501.2ZM397.5 488.1L468.7 487.9L469 500.6L397.9 500.9ZM524.2 487.7L594.5 487.5L594.5 500.1L524.4 500.4ZM649.3 487.3L842 486.7L841.4 499.2L649.1 499.9ZM312.7 500.6L370.2 500.4L370.7 513.1L313.3 513.4ZM397.9 500.3L469 500L469.2 512.7L398.3 513ZM510.4 499.9L608.3 499.5L608.2 512.1L510.6 512.5ZM649.1 499.3L704.6 499.1L704.3 511.7L648.9 511.9ZM717.7 499.1L841.4 498.6L840.8 511.1L717.4 511.6ZM313.3 512.8L370.7 512.5L371.2 525.2L313.9 525.5ZM398.3 512.4L455.2 512.1L455.5 524.8L398.8 525ZM510.6 511.9L552.9 511.7L553 524.3L510.7 524.5ZM580 511.6L690.7 511.1L690.4 523.6L580 524.1ZM717.4 511L840.8 510.5L840.2 522.9L717.1 523.5ZM313.9 524.9L371.2 524.6L371.6 537.2L314.5 537.5ZM398.8 524.4L455.5 524.2L455.8 536.7L399.2 537.1ZM496.8 524L553 523.7L553 536.2L497 536.5ZM580 523.5L690.4 523L690.2 535.4L580 536ZM717.1 522.9L840.2 522.3L839.6 534.6L716.7 535.3ZM314.5 536.9L371.6 536.6L372.1 549.2L315.1 549.5ZM399.2 536.5L455.8 536.1L456.1 548.7L399.6 549ZM483.1 536L539.2 535.7L539.3 548.2L483.3 548.5ZM580 535.4L690.2 534.8L689.9 547.2L580 547.9ZM703.2 534.8L839.6 534L839 546.3L702.9 547.1ZM315.1 548.9L358.1 548.7L358.6 561.2L315.7 561.5ZM371.5 548.6L386.2 548.5L386.6 561L372 561.1ZM399.6 548.4L456.1 548.1L456.4 560.5L400 560.9ZM483.3 547.9L539.3 547.6L539.4 560L483.5 560.4ZM580 547.3L621.8 547L621.7 559.4L580 559.7ZM662.1 546.8L771 546.1L770.6 558.4L661.9 559.1ZM797.3 545.9L839 545.7L838.4 557.9L796.8 558.2ZM315.7 560.9L358.6 560.6L359.1 573.1L316.3 573.4ZM386 560.4L456.4 559.9L456.7 572.4L386.5 572.9ZM483.5 559.8L539.4 559.4L539.5 571.8L483.7 572.2ZM566.3 559.2L621.7 558.8L621.6 571.1L566.3 571.5ZM661.9 558.5L730.2 558.1L729.9 570.3L661.7 570.8ZM743.1 558L770.6 557.8L770.2 570L742.7 570.2ZM796.8 557.6L838.4 557.3L837.9 569.5L796.3 569.8ZM302.2 572.9L359.1 572.5L359.6 584.9L302.9 585.4ZM386.5 572.3L456.7 571.8L456.9 584.1L386.9 584.7ZM497.6 571.5L525.7 571.3L525.9 583.6L497.7 583.8ZM566.3 570.9L621.6 570.5L621.5 582.8L566.4 583.3ZM661.7 570.2L729.9 569.7L729.5 581.9L661.6 582.5ZM756.1 569.5L770.2 569.4L769.7 581.6L755.7 581.7ZM796.3 569.2L837.9 568.9L837.3 581.1L795.8 581.4ZM302.9 584.8L331.6 584.6L332.1 597L303.5 597.2ZM386.9 584.1L443.1 583.7L443.4 596L387.3 596.5ZM511.5 583.1L525.9 583L526 595.3L511.7 595.4ZM566.4 582.7L648.6 582L648.5 594.2L566.4 594.9ZM661.6 581.9L729.5 581.3L729.2 593.5L661.4 594.1ZM782.5 580.9L837.3 580.5L836.7 592.6L782 593ZM387.3 595.9L429.6 595.5L429.9 607.8L387.8 608.2ZM497.9 594.9L512.3 594.8L512.4 607L498.1 607.2ZM580 594.2L648.5 593.6L648.3 605.8L580 606.4ZM661.4 593.5L742.6 592.8L742.2 604.9L661.2 605.6ZM768.7 592.6L836.7 592L836.1 604L768.3 604.6ZM360 607.9L416.1 607.3L416.5 619.6L360.5 620.1ZM470.7 606.8L526.1 606.3L526.2 618.5L470.9 619ZM593.6 605.7L661.8 605L661.6 617.2L593.6 617.8ZM688.1 604.8L742.2 604.3L741.9 616.4L687.8 616.9ZM768.3 604L836.1 603.4L835.5 615.4L767.8 616.1ZM304.8 620.1L333.3 619.8L333.8 632.1L305.4 632.4ZM346.6 619.7L416.5 619L416.8 631.2L347.1 631.9ZM457.2 618.6L539.9 617.8L540 629.9L457.5 630.8ZM607.1 617.1L661.6 616.6L661.4 628.6L607 629.2ZM687.8 616.3L755.2 615.6L754.8 627.6L687.6 628.3ZM767.8 615.5L795 615.2L794.5 627.2L767.4 627.5ZM305.4 631.8L333.8 631.5L334.4 643.7L306 644ZM361 631.2L416.8 630.6L417.2 642.8L361.5 643.4ZM457.5 630.2L553.5 629.2L553.6 641.2L457.7 642.3ZM607 628.6L661.4 628L661.2 640L607 640.6ZM700.9 627.6L754.8 627L754.4 639L700.7 639.6ZM306 643.4L334.4 643.1L334.9 655.2L306.6 655.6ZM361.5 642.8L417.2 642.2L417.6 654.3L362 654.9ZM457.7 641.7L540 640.8L540.1 652.8L458 653.8ZM593.5 640.2L661.2 639.4L661.1 651.4L593.5 652.2ZM700.7 639L754.4 638.4L754 650.3L700.4 650.9ZM819.7 637.6L834.4 637.5L833.8 649.3L819.2 649.5ZM306.6 655L334.9 654.6L335.5 666.7L307.2 667.1ZM362 654.3L431.3 653.5L431.6 665.6L362.4 666.4ZM471.6 653L526.6 652.4L526.7 664.4L471.9 665ZM593.5 651.6L661.1 650.8L660.9 662.7L593.5 663.5ZM700.4 650.3L740.8 649.8L740.4 661.7L700.1 662.2ZM307.2 666.5L335.5 666.1L336 678.2L307.8 678.6ZM376.2 665.6L431.6 665L431.9 677L376.7 677.7ZM485.5 664.3L513.2 663.9L513.3 675.9L485.7 676.2ZM593.5 662.9L660.9 662.1L660.7 674L593.4 674.8ZM700.1 661.6L753.6 660.9L753.2 672.7L699.9 673.4ZM805.5 660.3L819.2 660.1L818.7 671.9L805 672.1ZM307.8 678L336 677.6L336.6 689.6L308.4 690ZM390.4 676.9L431.9 676.4L432.3 688.3L390.8 688.9ZM580 674.4L647.4 673.5L647.3 685.4L580 686.3ZM699.9 672.8L753.2 672.1L752.8 683.9L699.6 684.6ZM792 671.6L832.7 671.1L832.1 682.8L791.5 683.4ZM308.4 689.4L350.3 688.8L350.8 700.8L309.1 701.4ZM390.8 688.3L418.7 687.9L419 699.8L391.2 700.2ZM580 685.7L634 684.9L633.9 696.7L580 697.5ZM699.6 684L739.7 683.5L739.4 695.2L699.3 695.8ZM791.5 682.8L832.1 682.2L831.6 693.9L791 694.5ZM309.1 700.8L350.8 700.2L351.3 712.1L309.7 712.7ZM686.2 695.4L739.4 694.6L739 706.3L685.9 707.1ZM778 694.1L817.6 693.5L817.1 705.1L777.5 705.7ZM323.4 711.9L365 711.3L365.5 723.1L323.9 723.8ZM672.8 706.7L725.9 705.9L725.6 717.5L672.6 718.3ZM764.5 705.3L817.1 704.5L816.6 716.1L764.1 716.9ZM323.9 723.2L379.1 722.3L379.5 734.1L324.5 735ZM659.4 718L712.5 717.1L712.2 728.7L659.2 729.6ZM751.1 716.5L816.6 715.5L816.1 727.1L750.7 728.1ZM324.5 734.4L393.1 733.3L393.5 745.1L325.1 746.2ZM646.1 729.2L686.1 728.6L685.8 740.1L645.9 740.8ZM750.7 727.5L790.2 726.9L789.8 738.4L750.3 739ZM325.1 745.6L393.5 744.5L393.9 756.2L325.6 757.3ZM486.9 742.9L500.9 742.6L501.1 754.3L487.2 754.5ZM632.8 740.4L672.7 739.8L672.5 751.3L632.7 752ZM750.3 738.4L789.8 737.8L789.3 749.2L750 749.9ZM325.6 756.7L339.8 756.5L340.3 768.2L326.2 768.4ZM352.8 756.3L393.9 755.6L394.3 767.2L353.3 767.9ZM433.6 754.8L447.6 754.6L447.9 766.2L434 766.5ZM487.2 753.9L501.1 753.7L501.3 765.3L487.4 765.5ZM619.5 751.6L672.5 750.7L672.3 762.2L619.5 763.1ZM737 749.5L789.3 748.6L788.8 760.1L736.7 761ZM814.4 748.2L828.8 748L828.3 759.3L813.9 759.6ZM312.6 768.1L326.8 767.8L327.4 779.5L313.2 779.7ZM366.8 767.1L394.3 766.6L394.7 778.2L367.2 778.7ZM645.6 762L659.3 761.8L659.1 773.3L645.5 773.5ZM736.7 760.4L788.8 759.5L788.4 770.8L736.3 771.8ZM367.2 778.1L394.7 777.6L395.1 789.2L367.7 789.7ZM723.4 771.4L749.8 771L749.4 782.3L723.1 782.8ZM774.9 770.5L788.4 770.2L787.9 781.6L774.5 781.8ZM340.8 789.6L354.9 789.3L355.5 803.8L341.5 804.1ZM381.1 788.8L421.9 788L422.3 802.4L381.7 803.3ZM619.3 784.2L632.9 784L632.8 798.2L619.2 798.5ZM658.4 783.5L671.9 783.2L671.7 797.4L658.1 797.7ZM710.2 782.5L723.7 782.2L723.3 796.4L709.8 796.6ZM774.5 781.2L800.7 780.7L800.1 794.8L774 795.3Z" fill="#ff7800"/>
<path d="M450.5 338.4L465.5 338.4L465.8 351.8L450.8 351.7ZM707.8 339.5L764.7 339.7L764.2 352.9L707.5 352.7ZM479.6 351.2L494.6 351.3L494.8 364.6L479.9 364.5ZM537.1 351.4L552 351.5L552.1 364.7L537.2 364.7ZM565.7 351.6L580.6 351.6L580.6 364.8L565.8 364.8ZM608.5 351.7L665.8 351.9L665.6 365.1L608.4 364.9ZM833.3 352.5L848.8 352.6L848.2 365.7L832.7 365.6ZM479.9 363.9L494.8 364L495 377.2L480.1 377.1ZM580 364.2L609 364.3L609 377.5L580 377.4ZM818.8 365L833.3 365L832.7 378L818.3 378ZM762.8 377.2L777.3 377.3L776.8 390.3L762.3 390.2ZM321.6 388.8L336.7 388.8L337.3 402.1L322.2 402ZM350.6 388.9L365.7 388.9L366.2 402.1L351.2 402.1ZM466 389.1L495.2 389.1L495.4 402.3L466.3 402.2ZM692.6 389.5L707.2 389.5L706.9 402.5L692.4 402.5ZM762.3 389.6L776.8 389.7L776.4 402.6L761.9 402.6ZM336.7 401.5L351.8 401.5L352.3 414.6L337.3 414.6ZM365.6 401.5L395.1 401.5L395.5 414.7L366.1 414.6ZM664.4 401.9L706.9 401.9L706.6 414.9L664.2 414.8ZM761.9 402L804 402L803.5 414.9L761.5 414.9ZM817.2 402.1L831.5 402.1L831 414.9L816.6 414.9ZM351.7 414L395.5 414.1L396 427.1L352.3 427.1ZM664.2 414.2L692.7 414.2L692.4 427.1L664 427.1ZM761.5 414.3L775.9 414.3L775.5 427.1L761.1 427.1ZM830.4 414.3L845.7 414.3L845.1 427.1L829.8 427.1ZM816.1 426.5L845.1 426.5L844.4 439.3L815.5 439.3ZM339 451.4L353.9 451.4L354.4 464.3L339.5 464.3ZM566 451.1L622.5 451L622.4 463.8L566 463.9ZM368.1 463.7L383 463.7L383.5 476.5L368.6 476.6ZM566 463.3L580.6 463.3L580.6 476L566.1 476.1ZM607.9 463.2L622.4 463.2L622.3 475.9L607.8 476ZM297.1 476.2L312 476.1L312.7 489L297.7 489ZM325.8 476.1L340.7 476L341.2 488.9L326.4 488.9ZM580 475.4L594.5 475.4L594.5 488.1L580 488.1ZM621.7 475.3L636.2 475.3L636.1 488L621.6 488ZM593.9 487.5L608.4 487.5L608.3 500.1L593.9 500.1ZM621.6 487.4L649.9 487.3L649.7 499.9L621.5 500ZM298.4 500.6L313.3 500.6L313.9 513.4L299 513.4ZM607.7 499.5L649.7 499.3L649.5 511.9L607.6 512.1ZM704 499.1L718.3 499.1L718 511.6L703.7 511.7ZM690.1 511.1L718 511L717.7 523.5L689.8 523.6ZM689.8 523L717.7 522.9L717.3 535.3L689.6 535.4ZM371 536.6L399.8 536.5L400.2 549L371.5 549.2ZM689.6 534.8L703.8 534.8L703.5 547.1L689.3 547.2ZM385.6 548.5L400.2 548.4L400.6 560.9L386 561ZM301.6 561L316.3 560.9L316.9 573.4L302.2 573.5ZM372.9 584.2L387.5 584.1L387.9 596.5L373.4 596.6ZM303.5 596.6L318.1 596.5L318.7 608.8L304.1 609ZM511.7 594.8L526 594.7L526.1 606.9L511.8 607ZM304.1 608.4L318.7 608.2L319.3 620.6L304.8 620.7ZM819.2 648.9L833.8 648.7L833.3 660.5L818.6 660.7ZM818.6 660.1L833.3 659.9L832.7 671.7L818.1 671.9Z" fill="#ff5100"/>
<path d="M421.8 351L436.9 351.1L437.2 364.4L422.2 364.3ZM450.8 351.1L465.8 351.2L466.1 364.5L451.1 364.4ZM451.1 363.8L480.5 363.9L480.7 377.1L451.4 377.1ZM551.8 426.5L566.5 426.5L566.6 439.4L551.9 439.5ZM324 439L339 439L339.6 452L324.6 452ZM509.6 438.9L524.3 438.9L524.4 451.8L509.7 451.8ZM353.3 451.4L396.8 451.3L397.3 464.2L353.8 464.3ZM523.8 451.2L538.5 451.1L538.6 464L524 464ZM467.6 463.5L482.3 463.5L482.6 476.3L467.9 476.3ZM524 463.4L538.6 463.4L538.7 476.2L524.1 476.2ZM468.1 487.9L482.8 487.9L483 500.6L468.4 500.6ZM510.2 487.8L524.8 487.7L525 500.4L510.4 500.5ZM454.6 512.1L469.2 512.1L469.5 524.7L454.9 524.8ZM496.6 512L511.2 511.9L511.3 524.5L496.8 524.6ZM482.9 524L497.4 524L497.6 536.5L483.1 536.6ZM552.4 523.7L566.8 523.6L566.8 536.1L552.4 536.2ZM552.4 535.6L566.8 535.5L566.9 548L552.5 548.1ZM538.7 547.6L566.9 547.4L566.9 559.8L538.8 560ZM358 560.6L372.6 560.5L373.1 573L358.5 573.1ZM483.7 571.6L498.2 571.5L498.3 583.8L484 583.9ZM442.5 583.7L456.9 583.5L457.2 595.9L442.8 596ZM317.5 596.5L332.1 596.4L332.7 608.7L318.1 608.8ZM429 595.5L443.4 595.4L443.7 607.7L429.3 607.8ZM470.4 595.2L484.8 595L485 607.3L470.7 607.4ZM566.4 594.3L580.6 594.2L580.6 606.4L566.4 606.5ZM318.1 608.2L332.7 608.1L333.3 620.4L318.7 620.6ZM415.5 607.3L429.9 607.2L430.2 619.5L415.9 619.6ZM456.9 607L471.3 606.8L471.5 619L457.2 619.2ZM580 605.8L594.2 605.7L594.2 617.8L580 618ZM289.6 620.3L305.4 620.1L306 632.4L290.2 632.5ZM661 616.6L688.4 616.3L688.2 628.3L660.8 628.6ZM687.6 627.7L701.5 627.6L701.3 639.6L687.4 639.7ZM416.6 642.2L430.9 642L431.3 654.1L417 654.3ZM444 641.8L458.3 641.7L458.6 653.8L444.3 653.9ZM767 638.2L780.8 638.1L780.4 650L766.6 650.1ZM458 653.2L472.2 653L472.5 665L458.3 665.2ZM580 651.7L594.1 651.6L594.1 663.5L580 663.7ZM753.4 649.7L767.2 649.5L766.8 661.4L753 661.5ZM779.8 649.4L806.7 649.1L806.1 660.9L779.3 661.2ZM334.9 666.1L349.3 666L349.8 678L335.4 678.2ZM458.3 664.6L472.5 664.4L472.7 676.4L458.6 676.6ZM792.4 660.4L806.1 660.3L805.6 672.1L792 672.2ZM376.7 677.1L391 676.9L391.4 688.9L377.1 689.1ZM458.6 676L486.3 675.6L486.5 687.6L458.8 687.9ZM499.2 675.5L513.3 675.3L513.5 687.2L499.4 687.4ZM526.2 675.1L553.8 674.8L553.8 686.6L526.4 687ZM566.6 674.6L580.6 674.4L580.6 686.3L566.6 686.5ZM646.8 673.5L660.7 673.4L660.5 685.2L646.7 685.4ZM418.1 687.9L432.3 687.7L432.6 699.6L418.4 699.8ZM458.8 687.3L500 686.8L500.2 698.6L459.1 699.2ZM512.9 686.6L527 686.4L527.1 698.3L513 698.5ZM553.2 686L567.2 685.9L567.3 697.7L553.3 697.9ZM633.4 684.9L647.3 684.8L647.1 696.5L633.3 696.7ZM686.4 684.2L700.2 684L699.9 695.8L686.2 696ZM739.1 683.5L752.8 683.3L752.4 695L738.8 695.2ZM350.2 700.2L364.5 700L365 711.9L350.7 712.1ZM391.2 699.6L405.4 699.4L405.8 711.3L391.6 711.5ZM418.4 699.2L432.6 699L432.9 710.9L418.8 711.1ZM459.1 698.6L500.2 698L500.4 709.9L459.4 710.5ZM553.3 697.3L567.3 697.1L567.3 708.9L553.4 709.1ZM620 696.3L633.9 696.1L633.7 707.9L619.9 708.1ZM673 695.6L686.8 695.4L686.5 707.1L672.8 707.3ZM764.9 694.2L778.6 694.1L778.1 705.7L764.5 705.9ZM364.4 711.3L378.6 711.1L379.1 722.9L364.9 723.1ZM405.2 710.7L432.9 710.3L433.3 722.1L405.6 722.5ZM472.9 709.7L500.4 709.3L500.5 721L473.1 721.5ZM513.2 709.1L607.2 707.7L607.2 719.4L513.3 720.8ZM659.6 706.9L673.4 706.7L673.2 718.3L659.4 718.6ZM725.3 705.9L739 705.7L738.6 717.3L725 717.5ZM816.5 704.5L831 704.3L830.5 715.9L816 716.1ZM405.6 721.9L419.7 721.7L420.1 733.5L406 733.7ZM540.1 719.8L554 719.6L554.1 731.3L540.2 731.5ZM566.7 719.4L593.9 719L593.9 730.7L566.8 731.1ZM711.9 717.1L725.6 716.9L725.3 728.5L711.6 728.7ZM816 715.5L830.5 715.3L829.9 726.8L815.5 727.1ZM698.5 728.3L712.2 728.1L711.9 739.7L698.3 739.9ZM802.6 726.7L829.9 726.2L829.4 737.7L802.1 738.2ZM685.2 739.5L698.9 739.3L698.6 750.8L685 751.1ZM312 757L326.2 756.7L326.8 768.4L312.6 768.7ZM566.8 752.5L607 751.8L606.9 763.4L566.9 764.1ZM671.9 750.7L685.6 750.5L685.4 761.9L671.7 762.2ZM434 765.9L447.9 765.6L448.2 777.2L434.3 777.5ZM606.3 762.8L633.2 762.3L633 773.7L606.3 774.2ZM813.9 759L828.3 758.7L827.7 770.1L813.4 770.4ZM313.2 779.1L327.4 778.9L327.9 790.5L313.8 790.7ZM619.4 773.4L633 773.1L632.9 784.6L619.3 784.8ZM671.5 772.4L685.1 772.2L684.9 783.6L671.3 783.8ZM787.8 770.2L801.2 770L800.7 781.3L787.3 781.6ZM327.3 789.9L341.4 789.6L342.1 804.1L328 804.3ZM487.8 786.8L501.6 786.5L501.8 800.8L488 801.1ZM632.3 784L659 783.5L658.7 797.7L632.2 798.2ZM800.1 780.7L813.5 780.5L812.9 794.6L799.5 794.8Z" fill="#ffdb00"/>
<path d="M495.6 451.2L510.3 451.2L510.5 464L495.8 464.1ZM510.1 475.6L524.7 475.6L524.8 488.3L510.2 488.4ZM538.8 559.4L566.9 559.2L566.9 571.5L538.9 571.8ZM538.9 571.2L553.2 571.1L553.3 583.4L539 583.5ZM345 584.4L359.6 584.3L360.1 596.7L345.5 596.8ZM484 583.3L498.3 583.2L498.5 595.5L484.2 595.6ZM539 582.9L553.3 582.8L553.3 595L539.1 595.2ZM331.5 596.4L346.1 596.2L346.6 608.6L332.1 608.7ZM359.5 596.1L374 596L374.5 608.3L360 608.5ZM539.2 606.2L553.4 606.1L553.5 618.2L539.3 618.4ZM580 617.4L594.2 617.2L594.1 629.3L580 629.5ZM580 628.9L594.1 628.7L594.1 640.8L580 640.9ZM660.8 628L688.2 627.7L688 639.7L660.6 640ZM347.6 642.9L362.1 642.8L362.6 654.9L348.1 655.1ZM687.4 639.1L701.3 639L701 650.9L687.1 651.1ZM539.5 652.2L553.7 652.1L553.7 664L539.6 664.2ZM766.6 649.5L780.4 649.4L779.9 661.2L766.2 661.4ZM362.4 665.8L376.8 665.6L377.3 677.7L362.9 677.8ZM526.1 663.8L540.2 663.6L540.3 675.5L526.2 675.7ZM753 660.9L766.8 660.8L766.4 672.6L752.6 672.7ZM779.3 660.6L793 660.4L792.6 672.2L778.9 672.4ZM512.7 675.3L526.8 675.1L527 687L512.9 687.2ZM553.2 674.8L567.2 674.6L567.2 686.5L553.2 686.6ZM686.6 673L700.5 672.8L700.2 684.6L686.4 684.8ZM778.9 671.8L792.6 671.6L792.1 683.4L778.4 683.6ZM445.6 698.8L459.7 698.6L460 710.5L445.9 710.7ZM432.3 710.3L473.5 709.7L473.7 721.5L432.7 722.1ZM499.8 709.3L513.8 709.1L513.9 720.8L499.9 721ZM606.6 707.7L620.5 707.5L620.4 719.2L606.6 719.4ZM751.5 705.5L765.1 705.3L764.7 716.9L751.1 717.1ZM310.3 723.4L324.5 723.2L325.1 735L310.9 735.2ZM432.7 721.5L540.7 719.8L540.8 731.5L433 733.3ZM553.4 719.6L567.3 719.4L567.4 731.1L553.5 731.3ZM646.2 718.2L660 718L659.8 729.6L646.1 729.8ZM419.5 732.9L500.7 731.6L500.9 743.2L419.9 744.6ZM513.5 731.4L554.1 730.7L554.1 742.4L513.6 743ZM566.8 730.5L593.9 730.1L593.9 741.7L566.8 742.1ZM446.7 743.6L487.5 742.9L487.8 754.5L447 755.2ZM566.8 741.5L593.9 741.1L593.8 752.7L566.8 753.1ZM737.4 738.7L750.9 738.4L750.6 749.9L737 750.1ZM447 754.6L487.8 753.9L488 765.5L447.3 766.2ZM606.4 751.8L620.1 751.6L620.1 763.1L606.3 763.4ZM685 750.5L698.6 750.2L698.4 761.7L684.8 761.9ZM788.7 748.6L802.2 748.4L801.7 759.8L788.2 760.1ZM447.3 765.6L501.3 764.7L501.4 776.2L447.6 777.2ZM553.7 763.7L606.9 762.8L606.9 774.2L553.7 775.2ZM723.7 760.6L737.3 760.4L736.9 771.8L723.4 772ZM580 774.1L593.8 773.9L593.7 785.3L580 785.6ZM313.8 790.1L327.9 789.9L328.6 804.3L314.5 804.6Z" fill="#bfff40"/>
<path d="M509.7 451.2L524.4 451.2L524.6 464L509.9 464ZM481.7 463.5L496.4 463.5L496.6 476.3L482 476.3ZM509.9 463.4L524.6 463.4L524.7 476.2L510.1 476.2ZM496.4 499.9L511 499.9L511.2 512.5L496.6 512.6ZM358.5 572.5L373.1 572.4L373.5 584.8L359 584.9ZM552.6 571.1L566.9 570.9L567 583.3L552.7 583.4ZM539.1 594.6L553.3 594.4L553.4 606.7L539.2 606.8ZM332.1 608.1L360.6 607.9L361.1 620.1L332.7 620.4ZM566.4 605.9L580.6 605.8L580.6 618L566.5 618.1ZM332.7 619.8L347.2 619.7L347.7 631.9L333.2 632.1ZM415.9 619L430.2 618.9L430.6 631.1L416.2 631.2ZM443.4 618.7L457.8 618.6L458.1 630.8L443.7 630.9ZM566.5 617.5L580.6 617.4L580.6 629.5L566.5 629.6ZM333.2 631.5L347.7 631.3L348.2 643.5L333.8 643.7ZM416.2 630.6L430.6 630.5L430.9 642.6L416.6 642.8ZM566.5 629L580.6 628.9L580.6 640.9L566.5 641.1ZM333.8 643.1L348.2 642.9L348.7 655.1L334.3 655.2ZM566.5 640.5L580.6 640.3L580.6 652.3L566.5 652.5ZM674 639.3L688 639.1L687.7 651.1L673.8 651.2ZM334.3 654.6L362.6 654.3L363 666.4L334.9 666.7ZM566.5 651.9L580.6 651.7L580.6 663.7L566.6 663.9ZM687.1 650.5L701 650.3L700.7 662.2L686.9 662.4ZM348.7 666L363 665.8L363.5 677.8L349.2 678ZM539.6 663.6L553.7 663.4L553.8 675.4L539.7 675.5ZM566.6 663.3L580.6 663.1L580.6 675L566.6 675.2ZM686.9 661.8L700.7 661.6L700.5 673.4L686.6 673.6ZM766.2 660.8L779.9 660.6L779.5 672.4L765.8 672.6ZM349.7 688.8L364 688.6L364.5 700.6L350.2 700.8ZM445.3 687.5L459.4 687.3L459.7 699.2L445.6 699.4ZM499.4 686.8L513.5 686.6L513.6 698.5L499.6 698.6ZM499.6 698L513.6 697.9L513.8 709.7L499.8 709.9ZM593.3 719L620.4 718.6L620.3 730.2L593.3 730.7ZM311.5 745.8L325.7 745.6L326.2 757.3L312 757.6ZM593.3 741.1L607 740.9L607 752.4L593.2 752.7ZM619.6 740.6L633.4 740.4L633.3 752L619.5 752.2ZM698.3 739.3L711.9 739.1L711.6 750.6L698 750.8ZM802.1 737.6L815.6 737.3L815 748.8L801.6 749ZM671.7 761.6L685.4 761.3L685.1 772.8L671.5 773ZM788.2 759.5L801.7 759.2L801.2 770.6L787.8 770.8ZM461 776.4L474.9 776.1L475.1 787.6L461.2 787.9ZM566.9 774.4L580.6 774.1L580.6 785.6L566.9 785.8ZM593.2 773.9L620 773.4L619.9 784.8L593.1 785.3ZM671.3 783.2L684.9 783L684.6 797.2L671.1 797.4Z" fill="#80ff80"/>
<path d="M495.8 463.5L510.5 463.4L510.7 476.2L496 476.3ZM496 475.7L510.7 475.6L510.8 488.4L496.2 488.4ZM496.2 487.8L510.8 487.8L511 500.5L496.4 500.5ZM468.4 500L483 500L483.2 512.6L468.6 512.7ZM482.6 512L497.2 512L497.4 524.6L482.9 524.6ZM454.9 524.2L469.5 524.1L469.7 536.7L455.2 536.7ZM359 584.3L373.5 584.2L374 596.6L359.5 596.7ZM552.7 582.8L567 582.7L567 594.9L552.7 595ZM429.3 607.2L443.7 607.1L444 619.3L429.6 619.5ZM290.2 631.9L306 631.8L306.6 644L290.9 644.2ZM290.9 643.6L306.6 643.4L307.2 655.6L291.5 655.7ZM660.6 639.4L674.6 639.3L674.4 651.2L660.5 651.4ZM444.3 653.3L458.6 653.2L458.9 665.2L444.7 665.4ZM553.1 652.1L567.1 651.9L567.2 663.9L553.1 664ZM673.8 650.6L687.7 650.5L687.5 662.4L673.6 662.5ZM444.7 664.8L458.9 664.6L459.2 676.6L445 676.8ZM553.1 663.4L567.2 663.3L567.2 675.2L553.2 675.4ZM445 676.2L459.2 676L459.4 687.9L445.3 688.1ZM765.8 672L779.5 671.8L779 683.6L765.3 683.7ZM646.7 684.8L660.5 684.6L660.3 696.4L646.5 696.5ZM765.3 683.1L779 683L778.6 694.7L764.9 694.8ZM378.5 722.3L392.6 722.1L393.1 733.9L378.9 734.1ZM310.9 734.6L325.1 734.4L325.7 746.2L311.5 746.4ZM500.1 731.6L514.1 731.4L514.2 743L500.3 743.2ZM593.3 730.1L607.1 729.8L607 741.5L593.3 741.7ZM632.9 729.4L646.7 729.2L646.5 740.8L632.8 741ZM711.6 728.1L725.3 727.9L724.9 739.5L711.3 739.7ZM513.6 742.4L540.9 742L540.9 753.6L513.8 754ZM801.6 748.4L815 748.2L814.5 759.6L801.1 759.8ZM801.1 759.2L814.5 759L814 770.4L800.6 770.6ZM474.3 776.1L501.4 775.6L501.6 787.1L474.5 787.6ZM800.6 770L827.7 769.5L827.2 780.8L800.1 781.3ZM566.9 785.2L580.6 785L580.6 799.3L567 799.5Z" fill="#40ffbf"/>
<path d="M482 475.7L496.6 475.7L496.8 488.4L482.2 488.5ZM482.2 487.9L496.8 487.8L497 500.5L482.4 500.6ZM482.4 500L497 499.9L497.2 512.6L482.6 512.6ZM470.2 583.4L484.6 583.3L484.8 595.6L470.4 595.8ZM345.5 596.2L360.1 596.1L360.6 608.5L346 608.6ZM456.6 595.3L471 595.2L471.3 607.4L456.9 607.6ZM552.7 594.4L567 594.3L567 606.5L552.8 606.7ZM552.8 606.1L567 605.9L567.1 618.1L552.9 618.2ZM552.9 617.6L567.1 617.5L567.1 629.6L552.9 629.8ZM552.9 629.2L567.1 629L567.1 641.1L553 641.2ZM553 640.6L567.1 640.5L567.1 652.5L553.1 652.7ZM291.5 655.1L307.2 655L307.8 667.1L292.2 667.3ZM660.5 650.8L674.4 650.6L674.2 662.5L660.3 662.7ZM673.6 661.9L687.5 661.8L687.2 673.6L673.4 673.8ZM349.2 677.4L377.3 677.1L377.7 689.1L349.7 689.4ZM673.4 673.2L687.2 673L687 684.8L673.2 685ZM752.6 672.1L766.4 672L765.9 683.7L752.2 683.9ZM377.1 688.5L391.4 688.3L391.8 700.2L377.6 700.4ZM673.2 684.4L687 684.2L686.8 696L673 696.2ZM432 699L446.2 698.8L446.5 710.7L432.3 710.9ZM633.3 696.1L647.1 695.9L647 707.7L633.1 707.9ZM619.9 707.5L633.7 707.3L633.6 719L619.8 719.2ZM553.5 730.7L567.4 730.5L567.4 742.1L553.5 742.4ZM698 750.2L711.6 750L711.4 761.5L697.8 761.7ZM684.8 761.3L698.4 761.1L698.1 772.5L684.5 772.8ZM553.7 774.6L567.5 774.4L567.5 785.8L553.8 786.1ZM461.2 787.3L475.1 787L475.4 801.4L461.6 801.6ZM553.8 785.5L567.5 785.2L567.6 799.5L553.8 799.8ZM606.2 784.5L619.9 784.2L619.8 798.5L606.1 798.7ZM697.3 782.7L710.8 782.5L710.4 796.6L696.9 796.9Z" fill="#00ffff"/>
<path d="M468.6 512.1L483.2 512L483.5 524.6L468.9 524.7ZM431 665L445.3 664.8L445.6 676.8L431.3 677ZM752.2 683.3L765.9 683.1L765.5 694.8L751.8 695ZM294.1 701L309.7 700.8L310.3 712.7L294.7 712.9ZM646.5 695.9L660.3 695.8L660.2 707.5L646.4 707.7ZM738.8 694.6L765.5 694.2L765.1 705.9L738.4 706.3ZM294.7 712.3L310.3 712.1L310.9 724L295.4 724.2ZM646.4 707.1L660.2 706.9L660 718.6L646.2 718.8ZM619.8 718.6L633.6 718.4L633.5 730L619.7 730.2ZM606.5 729.8L633.5 729.4L633.4 741L606.4 741.5ZM296.6 746.1L312.1 745.8L312.6 757.6L297.3 757.8ZM419.9 744L433.9 743.8L434.2 755.4L420.2 755.7ZM500.3 742.6L514.2 742.4L514.4 754L500.5 754.3ZM513.8 753.4L527.7 753.2L527.8 764.8L513.9 765ZM553.6 752.8L567.4 752.5L567.5 764.1L553.7 764.3ZM697.8 761.1L711.4 760.9L711.1 772.3L697.5 772.5ZM684.5 772.2L698.1 771.9L697.9 783.3L684.3 783.6ZM501 786.5L514.8 786.2L515 800.6L501.2 800.8ZM593.1 784.7L606.8 784.5L606.7 798.7L593.1 799Z" fill="#004dff"/>
<path d="M468.9 524.1L483.5 524L483.7 536.6L469.1 536.7ZM469.1 536.1L483.7 536L483.9 548.5L469.4 548.6ZM527.1 753.2L540.9 753L541 764.5L527.2 764.8Z" fill="#0000ff"/>
<path d="M455.2 536.1L469.7 536.1L470 548.6L455.5 548.7ZM455.5 548.1L470 548L470.3 560.5L455.8 560.5ZM442.8 595.4L457.2 595.3L457.5 607.6L443.1 607.7ZM429.6 618.9L444 618.7L444.3 630.9L430 631.1ZM292.2 666.7L307.8 666.5L308.4 678.6L292.8 678.8ZM660.3 662.1L674.2 661.9L674 673.8L660.1 674ZM292.8 678.2L308.4 678L309 690L293.5 690.2ZM431.7 687.7L445.9 687.5L446.2 699.4L432 699.6ZM659.7 695.8L673.6 695.6L673.4 707.3L659.6 707.5ZM295.4 723.6L310.9 723.4L311.5 735.2L296 735.5ZM725 716.9L738.6 716.7L738.3 728.3L724.7 728.5ZM296 734.9L311.5 734.6L312.1 746.4L296.6 746.7ZM606.4 740.9L620.2 740.6L620.1 752.2L606.4 752.4ZM394.1 777.6L421.5 777.1L421.9 788.6L394.5 789.2ZM447.6 776.6L461.6 776.4L461.8 787.9L447.9 788.1Z" fill="#00b2ff"/>
<path d="M469.4 548L483.9 547.9L484.1 560.4L469.7 560.5ZM469.9 571.7L484.3 571.6L484.6 583.9L470.2 584ZM430 630.5L444.3 630.3L444.6 642.4L430.3 642.6ZM430.7 653.5L444.9 653.3L445.3 665.4L431 665.6ZM377.6 699.8L391.8 699.6L392.2 711.5L378 711.7ZM378 711.1L392.2 710.9L392.6 722.7L378.5 722.9ZM633.1 707.3L647 707.1L646.8 718.8L633 719ZM406 733.1L420.1 732.9L420.5 744.6L406.4 744.8ZM724.7 727.9L751.3 727.5L750.9 739L724.3 739.5ZM540.3 742L554.1 741.8L554.2 753.4L540.3 753.6ZM711 750L737.6 749.5L737.3 761L710.8 761.5ZM513.9 764.4L541 763.9L541.1 775.5L514.1 776ZM500.8 775.6L554.3 774.6L554.4 786.1L501 787.1ZM474.5 787L488.4 786.8L488.6 801.1L474.8 801.4ZM514.2 786.2L554.4 785.5L554.4 799.8L514.4 800.6ZM812.9 780.5L827.2 780.2L826.5 794.3L812.3 794.6Z" fill="#0000c7"/>
<path d="M455.8 559.9L470.3 559.9L470.5 572.3L456.1 572.4ZM456.1 571.8L470.5 571.7L470.8 584L456.3 584.1ZM456.3 583.5L470.8 583.4L471 595.8L456.6 595.9ZM443.1 607.1L457.5 607L457.8 619.2L443.4 619.3ZM431.3 676.4L445.6 676.2L445.9 688.1L431.7 688.3ZM660.1 673.4L674 673.2L673.8 685L659.9 685.2ZM293.5 689.6L309 689.4L309.7 701.4L294.1 701.6ZM363.4 688.6L377.7 688.5L378.2 700.4L363.9 700.6ZM659.9 684.6L673.8 684.4L673.6 696.2L659.7 696.4ZM363.9 700L378.2 699.8L378.6 711.7L364.4 711.9ZM711.3 739.1L724.9 738.9L724.6 750.4L711 750.6Z" fill="#0080ff"/>
<path d="M469.7 559.9L484.1 559.8L484.3 572.2L469.9 572.3ZM430.3 642L444.6 641.8L444.9 653.9L430.7 654.1ZM391.6 710.9L405.8 710.7L406.2 722.5L392 722.7ZM738.4 705.7L752.1 705.5L751.7 717.1L738 717.3ZM392 722.1L406.2 721.9L406.6 733.7L392.5 733.9ZM633 718.4L646.8 718.2L646.7 729.8L632.9 730ZM738 716.7L751.7 716.5L751.3 728.1L737.7 728.3ZM392.5 733.3L406.6 733.1L407 744.8L392.9 745.1ZM392.9 744.5L420.5 744L420.8 755.7L393.3 756.2ZM553.5 741.8L567.4 741.5L567.4 753.1L553.6 753.4ZM724.3 738.9L738 738.7L737.6 750.1L724 750.4ZM297.3 757.2L312.6 757L313.2 768.7L297.9 768.9ZM393.3 755.6L434.2 754.8L434.6 766.5L393.7 767.2ZM500.5 753.7L514.4 753.4L514.5 765L500.7 765.3ZM540.3 753L554.2 752.8L554.3 764.3L540.4 764.5ZM297.9 768.3L313.2 768.1L313.8 779.7L298.5 780ZM393.7 766.6L434.6 765.9L434.9 777.5L394.1 778.2ZM500.7 764.7L514.5 764.4L514.7 776L500.8 776.2ZM540.4 763.9L554.3 763.7L554.3 775.2L540.5 775.5ZM710.8 760.9L724.3 760.6L724 772L710.5 772.3ZM298.5 779.4L313.8 779.1L314.4 790.7L299.1 791ZM420.9 777.1L448.2 776.6L448.5 788.1L421.3 788.6ZM697.5 771.9L724 771.4L723.7 782.8L697.3 783.3ZM299.1 790.4L314.4 790.1L315.1 804.6L299.9 804.9ZM421.3 788L461.8 787.3L462.2 801.6L421.7 802.4ZM684.3 783L697.9 782.7L697.5 796.9L684 797.2Z" fill="#000094"/>
</g>
<path d="M289.1 320.1L290 338M290 338L290.7 350.8M290.7 350.8L291.4 363.6M291.4 363.6L292.1 376.4M292.1 376.4L292.7 389.1M292.7 389.1L293.4 401.7M293.4 401.7L294.1 414.3M294.1 414.3L294.8 426.8M294.8 426.8L295.4 439.3M295.4 439.3L296.1 451.7M296.1 451.7L296.7 464.1M296.7 464.1L297.4 476.5M297.4 476.5L298 488.7M298 488.7L298.7 500.9M298.7 500.9L299.3 513.1M299.3 513.1L300 525.2M300 525.2L300.6 537.3M300.6 537.3L301.3 549.3M301.3 549.3L301.9 561.3M301.9 561.3L302.5 573.2M302.5 573.2L303.2 585.1M303.2 585.1L303.8 596.9M303.8 596.9L304.4 608.7M303.8 320.2L304.7 338M304.7 338L305.4 350.9M305.4 350.9L306 363.7M306 363.7L306.7 376.4M306.7 376.4L307.3 389.1M309.2 426.8L309.9 439.3M309.9 439.3L310.5 451.7M310.5 451.7L311.1 464.1M311.1 464.1L311.7 476.4M313.6 513.1L314.2 525.2M314.2 525.2L314.8 537.2M314.8 537.2L315.4 549.2M318.6 320.2L319.4 338.1M319.4 338.1L320.1 350.9M320.1 350.9L320.7 363.7M320.7 363.7L321.3 376.4M321.3 376.4L321.9 389.1M324.9 451.7L325.5 464.1M333.3 320.3L334.1 338.2M334.1 338.2L334.7 351M334.7 351L335.3 363.8M335.3 363.8L335.9 376.5M335.9 376.5L336.4 389.1M348 320.4L348.8 338.2M354.1 464L354.7 476.3M362.7 320.5L363.4 338.3M368.9 476.3L369.4 488.5M383.2 476.2L383.6 488.5M383.6 488.5L384.1 500.6M384.1 500.6L384.5 512.8M384.5 512.8L385 524.8M398.2 500.6L398.6 512.7" stroke="#c40000" stroke-width="1.9" fill="none"/>
<path d="M304.4 608.7L305.1 620.4M324.3 439.3L324.9 451.7M325.5 464.1L326.1 476.4M339.3 451.7L339.8 464M349.9 363.8L350.4 376.5M350.9 389.2L351.5 401.8M363.4 338.3L363.9 351.1M365.9 401.8L366.4 414.3M368.4 464L368.9 476.3M369.4 488.5L369.9 500.7M385 524.8L385.4 536.8M387.6 596.2L388.1 607.9M399.1 524.7L399.5 536.8" stroke="#f21c00" stroke-width="1.9" fill="none"/>
<path d="M305.1 620.4L305.7 632.1M325.9 757L326.5 768.1M327.1 779.2L327.6 790.2M331.8 596.7L332.4 608.4M332.4 608.4L333 620.1M341.1 789.9L341.8 803.8M338.7 439.3L339.3 451.7M349 666.3L349.5 677.7M364.2 700.3L364.7 711.6M367.9 451.7L368.4 464M372.3 560.8L372.8 572.7M378.3 711.4L378.8 722.6M382.2 451.6L382.7 464M390.7 677.2L391.1 688.6M396.5 451.6L397 463.9M405.1 699.7L405.5 711M419.1 710.8L419.4 722M419.4 722L419.8 733.2" stroke="#f2d000" stroke-width="1.9" fill="none"/>
<path d="M305.7 632.1L306.3 643.7M306.3 643.7L306.9 655.3M324.8 734.7L325.4 745.9M373.2 584.5L373.7 596.3M392.3 722.4L392.8 733.6" stroke="#3df2b6" stroke-width="1.9" fill="none"/>
<path d="M306.9 655.3L307.5 666.8M359.8 596.4L360.3 608.2M363.2 677.5L363.7 688.9M377 677.4L377.4 688.8M391.1 688.6L391.5 699.9" stroke="#00f2f2" stroke-width="1.9" fill="none"/>
<path d="M307.5 666.8L308.1 678.3M308.1 678.3L308.7 689.7M310.6 723.7L311.2 734.9M311.2 734.9L311.8 746.1M407.8 777.7L408.2 788.6M421.2 777.4L421.6 788.3" stroke="#00aaf2" stroke-width="1.9" fill="none"/>
<path d="M308.7 689.7L309.4 701.1M377.4 688.8L377.9 700.1M377.9 700.1L378.3 711.4" stroke="#0079f2" stroke-width="1.9" fill="none"/>
<path d="M309.4 701.1L310 712.4M310 712.4L310.6 723.7M311.8 746.1L312.3 757.3" stroke="#0049f2" stroke-width="1.9" fill="none"/>
<path d="M312.3 757.3L312.9 768.4M312.9 768.4L313.5 779.4M313.5 779.4L314.1 790.4M314.1 790.4L314.8 804.3M405.5 711L405.9 722.2M405.9 722.2L406.3 733.4M406.3 733.4L406.7 744.5M406.7 744.5L407.1 755.6M407.1 755.6L407.4 766.7M407.4 766.7L407.8 777.7M420.2 744.3L420.5 755.4M420.5 755.4L420.9 766.4M420.9 766.4L421.2 777.4" stroke="#00008d" stroke-width="1.9" fill="none"/>
<path d="M307.3 389.1L308 401.7M315.4 549.2L316 561.2M339.8 464L340.4 476.3M348.8 338.2L349.3 351M350.4 376.5L350.9 389.2M354.7 476.3L355.2 488.5M377.4 320.5L378 338.4M378 338.4L378.5 351.2M392 320.6L392.6 338.4M392.6 338.4L393.1 351.2M397.4 476.2L397.8 488.4M397.8 488.4L398.2 500.6M398.6 512.7L399.1 524.7M406.6 320.7L407.2 338.5M407.2 338.5L407.6 351.3" stroke="#c40000" stroke-width="1.9" fill="none"/>
<path d="M308 401.7L308.6 414.3M308.6 414.3L309.2 426.8M312.4 488.7L313 500.9M316.6 573.1L317.2 585M317.2 585L317.8 596.8M319 620.3L319.6 631.9M319.6 631.9L320.2 643.5M320.2 643.5L320.8 655.1M320.8 655.1L321.4 666.6M321.4 666.6L321.9 678.1M321.9 678.1L322.5 689.5M322.5 689.5L323.1 700.9M323.1 700.9L323.7 712.2M326.5 768.1L327.1 779.2M321.9 389.1L322.5 401.7M322.5 401.7L323.1 414.3M323.1 414.3L323.7 426.8M323.7 426.8L324.3 439.3M326.1 476.4L326.7 488.6M326.7 488.6L327.2 500.8M327.2 500.8L327.8 513M327.8 513L328.4 525.1M328.4 525.1L329 537.2M329 537.2L329.6 549.2M329.6 549.2L330.1 561.1M330.1 561.1L330.7 573M330.7 573L331.3 584.9M331.3 584.9L331.8 596.7M333 620.1L333.5 631.8M333.5 631.8L334.1 643.4M334.1 643.4L334.6 654.9M334.6 654.9L335.2 666.4M335.2 666.4L335.7 677.9M335.7 677.9L336.3 689.3M336.3 689.3L336.8 700.7M336.8 700.7L337.4 712M337.4 712L337.9 723.3M337.9 723.3L338.4 734.5M338.4 734.5L339 745.7M339 745.7L339.5 756.8M339.5 756.8L340 767.9M337 401.8L337.6 414.3M340.9 488.6L341.5 500.8M341.5 500.8L342 512.9M342 512.9L342.6 525M342.6 525L343.1 537.1M343.1 537.1L343.7 549.1M343.7 549.1L344.2 561M344.2 561L344.7 572.9M344.7 572.9L345.3 584.7M350 689.1L350.5 700.5M350.5 700.5L351 711.8M351 711.8L351.5 723.1M351.5 723.1L352 734.3M352 734.3L352.6 745.4M352.6 745.4L353.1 756.6M354.6 789.6L355.2 803.5M349.3 351L349.9 363.8M352 414.3L352.6 426.8M355.2 488.5L355.7 500.7M355.7 500.7L356.2 512.9M356.2 512.9L356.7 525M356.7 525L357.2 537M357.2 537L357.8 549M357.8 549L358.3 560.9M358.3 560.9L358.8 572.8M358.8 572.8L359.3 584.6M360.8 619.8L361.3 631.5M364.7 711.6L365.2 722.8M365.2 722.8L365.6 734.1M365.6 734.1L366.1 745.2M366.1 745.2L366.6 756.3M366.6 756.3L367.1 767.4M363.9 351.1L364.4 363.9M364.4 363.9L364.9 376.6M364.9 376.6L365.4 389.2M366.9 426.8L367.4 439.3M369.9 500.7L370.4 512.8M370.4 512.8L370.9 524.9M370.9 524.9L371.3 536.9M371.3 536.9L371.8 548.9M374.2 608L374.6 619.7M374.6 619.7L375.1 631.3M375.1 631.3L375.6 642.9M375.6 642.9L376 654.4M376 654.4L376.5 665.9M378.8 722.6L379.2 733.8M379.2 733.8L379.7 745M379.7 745L380.1 756.1M380.1 756.1L380.5 767.1M380.5 767.1L381 778.2M381 778.2L381.4 789.1M378.5 351.2L379 363.9M379.4 376.6L379.9 389.2M379.9 389.2L380.4 401.8M381.3 426.8L381.8 439.3M385.9 548.8L386.3 560.7M388.1 607.9L388.5 619.6M388.5 619.6L388.9 631.2M388.9 631.2L389.4 642.8M389.4 642.8L389.8 654.3M389.8 654.3L390.2 665.8M390.2 665.8L390.7 677.2M392.8 733.6L393.2 744.8M393.2 744.8L393.6 755.9M393.6 755.9L394 766.9M394 766.9L394.4 777.9M394.4 777.9L394.8 788.9M394.8 788.9L395.3 802.7M393.1 351.2L393.5 363.9M393.5 363.9L393.9 376.6M393.9 376.6L394.4 389.3M394.4 389.3L394.8 401.8M395.7 426.8L396.1 439.3M396.1 439.3L396.5 451.6M400.3 560.6L400.7 572.5M400.7 572.5L401.1 584.3M401.1 584.3L401.5 596.1M401.5 596.1L401.9 607.8M401.9 607.8L402.3 619.4M402.3 619.4L402.7 631M402.7 631L403.1 642.6M403.1 642.6L403.5 654.1M403.5 654.1L403.9 665.6M403.9 665.6L404.3 677M404.3 677L404.7 688.4M404.7 688.4L405.1 699.7M408.2 788.6L408.7 802.4M407.6 351.3L408 364M408 364L408.4 376.7M408.4 376.7L408.8 389.3M408.8 389.3L409.2 401.9M409.2 401.9L409.6 414.4M409.6 414.4L410 426.8M410 426.8L410.4 439.2M410.4 439.2L410.8 451.6M411.6 476.2L412 488.4M412 488.4L412.4 500.5M412.4 500.5L412.7 512.6M412.7 512.6L413.1 524.7M413.1 524.7L413.5 536.7M413.5 536.7L413.9 548.6M413.9 548.6L414.3 560.5M414.3 560.5L414.7 572.4M414.7 572.4L415 584.2M415 584.2L415.4 595.9M415.4 595.9L415.8 607.6M415.8 607.6L416.2 619.3M416.2 619.3L416.5 630.9M416.5 630.9L416.9 642.5M416.9 642.5L417.3 654M417.3 654L417.6 665.4M417.6 665.4L418 676.8M418 676.8L418.4 688.2M418.4 688.2L418.7 699.5M421.6 788.3L422 802.1" stroke="#f27200" stroke-width="1.9" fill="none"/>
<path d="M311.7 476.4L312.4 488.7M313 500.9L313.6 513.1M316 561.2L316.6 573.1M317.8 596.8L318.4 608.5M318.4 608.5L319 620.3M336.4 389.1L337 401.8M340.4 476.3L340.9 488.6M351.5 401.8L352 414.3M353.6 451.7L354.1 464M365.4 389.2L365.9 401.8M366.4 414.3L366.9 426.8M380.4 401.8L380.9 414.4M380.9 414.4L381.3 426.8M382.7 464L383.2 476.2M385.4 536.8L385.9 548.8M387.2 584.4L387.6 596.2M394.8 401.8L395.2 414.4M395.2 414.4L395.7 426.8M399.5 536.8L399.9 548.7M399.9 548.7L400.3 560.6" stroke="#f24d00" stroke-width="1.9" fill="none"/>
<path d="M323.7 712.2L324.2 723.5M340 767.9L340.6 778.9M340.6 778.9L341.1 789.9M337.6 414.3L338.1 426.8M338.1 426.8L338.7 439.3M345.3 584.7L345.8 596.5M349.5 677.7L350 689.1M353.1 756.6L353.6 767.6M353.6 767.6L354.1 778.7M354.1 778.7L354.6 789.6M352.6 426.8L353.1 439.3M353.1 439.3L353.6 451.7M361.3 631.5L361.8 643.1M367.1 767.4L367.5 778.4M367.5 778.4L368 789.4M368 789.4L368.6 803.2M367.4 439.3L367.9 451.7M371.8 548.9L372.3 560.8M381.4 789.1L382 803M379 363.9L379.4 376.6M381.8 439.3L382.2 451.6M386.3 560.7L386.8 572.6M386.8 572.6L387.2 584.4M397 463.9L397.4 476.2M410.8 451.6L411.2 463.9M411.2 463.9L411.6 476.2M418.7 699.5L419.1 710.8" stroke="#f29200" stroke-width="1.9" fill="none"/>
<path d="M324.2 723.5L324.8 734.7M327.6 790.2L328.3 804M345.8 596.5L346.3 608.3M359.3 584.6L359.8 596.4M361.8 643.1L362.3 654.6M373.7 596.3L374.2 608M376.5 665.9L377 677.4" stroke="#b6f23d" stroke-width="1.9" fill="none"/>
<path d="M325.4 745.9L325.9 757M346.3 608.3L346.9 620M346.9 620L347.4 631.6M347.4 631.6L347.9 643.2M347.9 643.2L348.4 654.8M348.4 654.8L349 666.3M360.3 608.2L360.8 619.8M362.3 654.6L362.7 666.1M362.7 666.1L363.2 677.5M363.7 688.9L364.2 700.3M372.8 572.7L373.2 584.5" stroke="#79f279" stroke-width="1.9" fill="none"/>
<path d="M391.5 699.9L391.9 711.2M391.9 711.2L392.3 722.4M419.8 733.2L420.2 744.3" stroke="#0000bd" stroke-width="1.9" fill="none"/>
<path d="M421.2 320.8L421.7 338.5M435.8 320.8L436.2 338.6M450.3 320.9L450.8 338.7M464.9 321L465.2 338.7" stroke="#c40000" stroke-width="1.5" fill="none"/>
<path d="M421.7 338.5L422.1 351.3" stroke="#f21c00" stroke-width="1.5" fill="none"/>
<path d="M422.1 351.3L422.5 364M422.5 364L422.8 376.7M422.8 376.7L423.2 389.3M423.2 389.3L423.6 401.9M423.6 401.9L423.9 414.4M423.9 414.4L424.3 426.8M424.3 426.8L424.7 439.2M424.7 439.2L425 451.6M425 451.6L425.4 463.9M425.4 463.9L425.8 476.1M425.8 476.1L426.1 488.3M426.1 488.3L426.5 500.5M426.5 500.5L426.8 512.6M426.8 512.6L427.2 524.6M427.2 524.6L427.5 536.6M427.5 536.6L427.9 548.5M427.9 548.5L428.2 560.4M428.2 560.4L428.6 572.3M428.6 572.3L428.9 584.1M428.9 584.1L429.3 595.8M429.3 595.8L429.6 607.5M431 653.8L431.3 665.3M431.3 665.3L431.6 676.7M431.6 676.7L432 688M436.9 364.1L437.3 376.7M437.3 376.7L437.6 389.3M437.6 389.3L437.9 401.9M437.9 401.9L438.3 414.4M439.3 451.6L439.6 463.9M439.6 463.9L439.9 476.1M439.9 476.1L440.2 488.3M440.2 488.3L440.6 500.4M440.6 500.4L440.9 512.5M440.9 512.5L441.2 524.5M441.2 524.5L441.5 536.5M441.5 536.5L441.8 548.5M441.8 548.5L442.2 560.3M442.2 560.3L442.5 572.2M442.5 572.2L442.8 584M442.8 584L443.1 595.7M447.3 754.9L447.6 765.9M450.8 338.7L451.1 351.4M451.1 351.4L451.4 364.1M451.4 364.1L451.7 376.8M451.7 376.8L452 389.4M452 389.4L452.3 401.9M452.3 401.9L452.6 414.4M452.6 414.4L452.9 426.8M453.5 451.6L453.8 463.8M453.8 463.8L454 476.1M454 476.1L454.3 488.2M454.3 488.2L454.6 500.4M454.6 500.4L454.9 512.4M454.9 512.4L455.2 524.5M455.2 524.5L455.5 536.4M455.5 536.4L455.8 548.4M455.8 548.4L456.1 560.2M456.1 560.2L456.4 572.1M456.4 572.1L456.6 583.8M466.3 389.4L466.6 401.9M466.6 401.9L466.8 414.4M466.8 414.4L467.1 426.8M467.1 426.8L467.4 439.2M467.4 439.2L467.6 451.5M468.4 488.2L468.7 500.3M468.7 500.3L468.9 512.4M471.2 618.7L471.5 630.3M471.5 630.3L471.7 641.8M471.7 641.8L471.9 653.3" stroke="#f27200" stroke-width="1.5" fill="none"/>
<path d="M429.6 607.5L429.9 619.2M430.6 642.3L431 653.8M432 688L432.3 699.3M432.3 699.3L432.6 710.6M432.6 710.6L433 721.8M436.6 351.4L436.9 364.1M443.1 595.7L443.4 607.4M447.6 765.9L447.9 776.9M456.6 583.8L456.9 595.6M458 642L458.3 653.5M465.5 351.5L465.8 364.2M465.8 364.2L466 376.8M468.9 512.4L469.2 524.4M471 607.1L471.2 618.7M471.9 653.3L472.2 664.7M472.2 664.7L472.4 676.1M472.4 676.1L472.7 687.5M472.7 687.5L472.9 698.7M472.9 698.7L473.2 710" stroke="#f2d000" stroke-width="1.5" fill="none"/>
<path d="M429.9 619.2L430.3 630.8M430.3 630.8L430.6 642.3M457.5 618.9L457.8 630.5M459.1 687.6L459.4 698.9M474.6 776.4L474.8 787.3" stroke="#79f279" stroke-width="1.5" fill="none"/>
<path d="M433 721.8L433.3 733M436.2 338.6L436.6 351.4M438.3 414.4L438.6 426.8M438.6 426.8L438.9 439.2M438.9 439.2L439.3 451.6M447 743.9L447.3 754.9M452.9 426.8L453.2 439.2M453.2 439.2L453.5 451.6M457.8 630.5L458 642M466 376.8L466.3 389.4M467.6 451.5L467.9 463.8M467.9 463.8L468.2 476M468.2 476L468.4 488.2" stroke="#f29200" stroke-width="1.5" fill="none"/>
<path d="M433.3 733L433.6 744.1M446.2 710.4L446.5 721.6M446.5 721.6L446.8 732.7M446.8 732.7L447 743.9M459.4 698.9L459.7 710.2M459.7 710.2L459.9 721.4M459.9 721.4L460.2 732.5M460.2 732.5L460.5 743.6M460.5 743.6L460.7 754.7M460.7 754.7L461 765.7M461 765.7L461.3 776.7M473.2 710L473.4 721.2M473.4 721.2L473.6 732.3M473.6 732.3L473.9 743.4M473.9 743.4L474.1 754.4M474.1 754.4L474.3 765.5M474.3 765.5L474.6 776.4" stroke="#b6f23d" stroke-width="1.5" fill="none"/>
<path d="M433.6 744.1L433.9 755.1M445 665.1L445.3 676.5" stroke="#0049f2" stroke-width="1.5" fill="none"/>
<path d="M433.9 755.1L434.3 766.2M434.3 766.2L434.6 777.2M434.6 777.2L434.9 788.1M434.9 788.1L435.3 801.9M444.3 642.1L444.6 653.6M447.9 776.9L448.2 787.8M448.2 787.8L448.6 801.6M461.5 787.6L461.9 801.3" stroke="#00008d" stroke-width="1.5" fill="none"/>
<path d="M443.4 607.4L443.7 619M458.3 653.5L458.6 664.9M458.6 664.9L458.9 676.3M458.9 676.3L459.1 687.6M469.2 524.4L469.4 536.4" stroke="#3df2b6" stroke-width="1.5" fill="none"/>
<path d="M443.7 619L444 630.6M445.6 687.8L445.9 699.1M456.9 595.6L457.2 607.3M461.3 776.7L461.5 787.6M469.4 536.4L469.7 548.3M469.7 548.3L470 560.2" stroke="#00aaf2" stroke-width="1.5" fill="none"/>
<path d="M444 630.6L444.3 642.1M444.6 653.6L445 665.1" stroke="#0000bd" stroke-width="1.5" fill="none"/>
<path d="M445.3 676.5L445.6 687.8M457.2 607.3L457.5 618.9M470 560.2L470.2 572M470.2 572L470.5 583.7M470.5 583.7L470.7 595.5" stroke="#0079f2" stroke-width="1.5" fill="none"/>
<path d="M445.9 699.1L446.2 710.4M470.7 595.5L471 607.1M474.8 787.3L475.1 801.1" stroke="#00f2f2" stroke-width="1.5" fill="none"/>
<path d="M465.2 338.7L465.5 351.5" stroke="#f24d00" stroke-width="1.5" fill="none"/>
<path d="M479.4 321.1L479.7 338.8" stroke="#c40000" stroke-width="1.1" fill="none"/>
<path d="M479.7 338.8L479.9 351.5M494.1 338.9L494.3 351.6" stroke="#f21c00" stroke-width="1.1" fill="none"/>
<path d="M479.9 351.5L480.2 364.2M480.9 401.9L481.1 414.4M481.1 414.4L481.3 426.8M484.7 607L484.9 618.6M484.9 618.6L485.1 630.2M485.1 630.2L485.3 641.7M485.3 641.7L485.6 653.2M485.6 653.2L485.8 664.6M494.7 376.9L494.9 389.4M495.1 402L495.3 414.4M495.3 414.4L495.5 426.8M495.5 426.8L495.7 439.2M497.3 536.2L497.5 548.1M497.5 548.1L497.7 560M497.7 560L497.9 571.8M498.4 606.9L498.6 618.5M498.6 618.5L498.8 630M498.8 630L499 641.5M499 641.5L499.2 653M499.2 653L499.3 664.4M499.3 664.4L499.5 675.8M509.2 389.5L509.4 402M509.4 402L509.6 414.4M509.6 414.4L509.7 426.8M511.3 548L511.5 559.9M511.5 559.9L511.7 571.7M511.7 571.7L511.8 583.4M512.4 629.9L512.6 641.4M512.6 641.4L512.7 652.8M512.7 652.8L512.9 664.2" stroke="#f27200" stroke-width="1.1" fill="none"/>
<path d="M480.2 364.2L480.4 376.8M482.5 488.2L482.7 500.3M484.5 595.3L484.7 607M486 675.9L486.2 687.3M486.2 687.3L486.4 698.5M486.4 698.5L486.6 709.8M486.6 709.8L486.8 721M497.1 524.3L497.3 536.2M499.7 687.1L499.9 698.3M526.7 686.7L526.8 698M526.9 709.2L527 720.3" stroke="#f2d000" stroke-width="1.1" fill="none"/>
<path d="M480.4 376.8L480.6 389.4M481.3 426.8L481.6 439.2M481.6 439.2L481.8 451.5M485.8 664.6L486 675.9M498.2 595.2L498.4 606.9M499.5 675.8L499.7 687.1M526.8 698L526.9 709.2" stroke="#f29200" stroke-width="1.1" fill="none"/>
<path d="M480.6 389.4L480.9 401.9M494.3 351.6L494.5 364.3M494.5 364.3L494.7 376.9M494.9 389.4L495.1 402" stroke="#f24d00" stroke-width="1.1" fill="none"/>
<path d="M482.7 500.3L482.9 512.3" stroke="#3df2b6" stroke-width="1.1" fill="none"/>
<path d="M482.9 512.3L483.2 524.3" stroke="#0049f2" stroke-width="1.1" fill="none"/>
<path d="M483.2 524.3L483.4 536.3" stroke="#0000f2" stroke-width="1.1" fill="none"/>
<path d="M486.8 721L487 732.1M487 732.1L487.2 743.2M487.2 743.2L487.5 754.2M487.5 754.2L487.7 765.2M527 720.3L527.1 731.4" stroke="#b6f23d" stroke-width="1.1" fill="none"/>
<path d="M273.4 327.6L289.5 327.7M289.5 327.7L304.2 327.7M304.2 327.7L318.9 327.8M318.9 327.8L333.7 327.9M333.7 327.9L348.3 328M348.3 328L363 328M274 337.9L290 338M290 338L304.7 338M304.7 338L319.4 338.1M319.4 338.1L334.1 338.2M274.7 350.8L290.7 350.8M290.7 350.8L305.4 350.9M305.4 350.9L320.1 350.9M320.1 350.9L334.7 351M508.7 351.6L523.1 351.7M777.9 352.6L791.9 352.7M805.8 352.7L819.7 352.8M508.9 364.3L523.2 364.3M665.3 364.8L679.4 364.8M805.3 365.2L819.1 365.3M276.2 376.3L292.1 376.4M292.1 376.4L306.7 376.4M306.7 376.4L321.3 376.4M321.3 376.4L335.9 376.5M665.1 377.3L679.2 377.3M276.9 389L292.7 389.1" stroke="#c40000" stroke-width="1.0" fill="none"/>
<path d="M363 328L377.6 328.1M377.6 328.1L392.3 328.2M392.3 328.2L406.9 328.2M406.9 328.2L421.4 328.3M421.4 328.3L436 328.4M436 328.4L450.5 328.5M450.5 328.5L465 328.5M465 328.5L479.5 328.6M479.5 328.6L494 328.7M494 328.7L508.4 328.7M334.1 338.2L348.8 338.2M363.4 338.3L378 338.4M378 338.4L392.6 338.4M392.6 338.4L407.2 338.5M508.5 338.9L522.9 339M522.9 339L537.3 339M679.9 339.7L694 339.7M778.4 340.1L792.4 340.2M792.4 340.2L806.3 340.2M806.3 340.2L820.3 340.3M523.1 351.7L537.4 351.7M665.5 352.2L679.6 352.3M679.6 352.3L693.7 352.3M693.7 352.3L707.8 352.4M791.9 352.7L805.8 352.7M819.7 352.8L833.6 352.8M494.5 364.3L508.9 364.3M523.2 364.3L537.5 364.4M679.4 364.8L693.5 364.9M693.5 364.9L707.5 364.9M777.4 365.1L791.4 365.2M791.4 365.2L805.3 365.2M679.2 377.3L693.2 377.4M693.2 377.4L707.2 377.4M777 377.6L790.9 377.6M790.9 377.6L804.7 377.6M292.7 389.1L307.3 389.1" stroke="#c40000" stroke-width="1.0" fill="none"/>
<path d="M508.4 328.7L522.8 328.8M522.8 328.8L537.2 328.9M537.2 328.9L551.6 328.9M551.6 328.9L566 329M566 329L580.3 329.1M580.3 329.1L594.6 329.2M594.6 329.2L608.9 329.2M608.9 329.2L623.2 329.3M623.2 329.3L637.4 329.4M637.4 329.4L651.7 329.4M651.7 329.4L665.9 329.5M665.9 329.5L680 329.6M680 329.6L694.2 329.6M694.2 329.6L708.3 329.7M708.3 329.7L722.5 329.8M722.5 329.8L736.6 329.8M736.6 329.8L750.6 329.9M750.6 329.9L764.7 330M764.7 330L778.7 330M778.7 330L792.8 330.1M792.8 330.1L806.8 330.2M806.8 330.2L820.7 330.2M820.7 330.2L834.7 330.3M834.7 330.3L849.6 330.4M348.8 338.2L363.4 338.3M407.2 338.5L421.7 338.5M465.2 338.7L479.7 338.8M479.7 338.8L494.1 338.9M494.1 338.9L508.5 338.9M537.3 339L551.7 339.1M551.7 339.1L566 339.2M566 339.2L580.3 339.2M580.3 339.2L594.6 339.3M594.6 339.3L608.9 339.4M608.9 339.4L623.1 339.4M623.1 339.4L637.3 339.5M637.3 339.5L651.5 339.5M651.5 339.5L665.7 339.6M665.7 339.6L679.9 339.7M694 339.7L708.1 339.8M764.4 340L778.4 340.1M820.3 340.3L834.2 340.3M834.2 340.3L849.1 340.4M494.3 351.6L508.7 351.6M580.3 351.9L594.6 352M594.6 352L608.8 352M509.1 376.9L523.3 376.9M336.4 389.1L350.9 389.2M803.7 402.3L817.5 402.4" stroke="#f21c00" stroke-width="1.0" fill="none"/>
<path d="M421.7 338.5L436.2 338.6M364.4 363.9L379 363.9M551.8 364.4L566.1 364.5" stroke="#f29200" stroke-width="1.0" fill="none"/>
<path d="M436.2 338.6L450.8 338.7M334.7 351L349.3 351M349.3 351L363.9 351.1M363.9 351.1L378.5 351.2M378.5 351.2L393.1 351.2M393.1 351.2L407.6 351.3M407.6 351.3L422.1 351.3M436.6 351.4L451.1 351.4M465.5 351.5L479.9 351.5M551.7 351.8L566 351.9M707.8 352.4L721.9 352.4M721.9 352.4L735.9 352.5M735.9 352.5L749.9 352.5M749.9 352.5L763.9 352.6M763.9 352.6L777.9 352.6M349.9 363.8L364.4 363.9M379 363.9L393.5 363.9M393.5 363.9L408 364M408 364L422.5 364M422.5 364L436.9 364.1M436.9 364.1L451.4 364.1M537.5 364.4L551.8 364.4M566.1 364.5L580.3 364.5M608.7 364.6L622.9 364.7M622.9 364.7L637.1 364.7M637.1 364.7L651.2 364.7M651.2 364.7L665.3 364.8M707.5 364.9L721.5 365M721.5 365L735.5 365M735.5 365L749.5 365M749.5 365L763.5 365.1M763.5 365.1L777.4 365.1M833 365.3L847.9 365.4M523.3 376.9L537.6 377M537.6 377L551.9 377M551.9 377L566.1 377.1M566.1 377.1L580.3 377.1M580.3 377.1L594.5 377.1M594.5 377.1L608.7 377.2M608.7 377.2L622.8 377.2M622.8 377.2L636.9 377.2M636.9 377.2L651 377.3M651 377.3L665.1 377.3M707.2 377.4L721.2 377.4M721.2 377.4L735.2 377.5M735.2 377.5L749.1 377.5M749.1 377.5L763.1 377.5M307.3 389.1L321.9 389.1M365.4 389.2L379.9 389.2M379.9 389.2L394.4 389.3M394.4 389.3L408.8 389.3M408.8 389.3L423.2 389.3M423.2 389.3L437.6 389.3M437.6 389.3L452 389.4M622.6 402.1L636.7 402.1M636.7 402.1L650.7 402.2M650.7 402.2L664.7 402.2M706.6 402.2L720.6 402.2M720.6 402.2L734.5 402.3M734.5 402.3L748.3 402.3M748.3 402.3L762.2 402.3M831.2 402.4L846 402.4" stroke="#f27200" stroke-width="1.0" fill="none"/>
<path d="M450.8 338.7L465.2 338.7M708.1 339.8L722.2 339.8M722.2 339.8L736.3 339.9M736.3 339.9L750.3 340M750.3 340L764.4 340M479.9 351.5L494.3 351.6M537.4 351.7L551.7 351.8M566 351.9L580.3 351.9M608.8 352L623 352.1M623 352.1L637.2 352.1M637.2 352.1L651.4 352.2M651.4 352.2L665.5 352.2M833.6 352.8L848.5 352.9M480.2 364.2L494.5 364.3M580.3 364.5L594.5 364.6M594.5 364.6L608.7 364.6M819.1 365.3L833 365.3M763.1 377.5L777 377.6M321.9 389.1L336.4 389.1M350.9 389.2L365.4 389.2M664.7 402.2L678.7 402.2M678.7 402.2L692.7 402.2M692.7 402.2L706.6 402.2M762.2 402.3L776.1 402.3M776.1 402.3L789.9 402.3M789.9 402.3L803.7 402.3M817.5 402.4L831.2 402.4" stroke="#f24d00" stroke-width="1.0" fill="none"/>
<path d="M422.1 351.3L436.6 351.4M451.1 351.4L465.5 351.5M451.4 364.1L465.8 364.2M465.8 364.2L480.2 364.2" stroke="#f2d000" stroke-width="1.0" fill="none"/>
<defs><linearGradient id="cb" x1="0" y1="340" x2="0" y2="744" gradientUnits="userSpaceOnUse">
<stop offset="0.0000" stop-color="#800000"/>
<stop offset="0.1064" stop-color="#800000"/>
<stop offset="0.2265" stop-color="#ff0000"/>
<stop offset="0.3366" stop-color="#ff8000"/>
<stop offset="0.4480" stop-color="#ffff00"/>
<stop offset="0.5582" stop-color="#80ff80"/>
<stop offset="0.6683" stop-color="#00ffff"/>
<stop offset="0.7797" stop-color="#0080ff"/>
<stop offset="0.8899" stop-color="#0000ff"/>
<stop offset="1.0000" stop-color="#000086"/>
</linearGradient></defs>
<rect x="1034" y="340" width="33.2" height="404" fill="url(#cb)"/>
<text x="1026.4" y="305" font-size="20" fill="#ff0000" font-family="Liberation Sans, sans-serif" stroke="#000" stroke-width="0.5" textLength="47" lengthAdjust="spacingAndGlyphs">645.9</text>
<text x="1023" y="759" font-size="20" fill="#ff0000" font-family="Liberation Sans, sans-serif" stroke="#000" stroke-width="0.5" textLength="52.8" lengthAdjust="spacingAndGlyphs">-634.4</text>
<text transform="translate(1087 708.5) rotate(-90)" font-size="19.2" fill="#ff0000" font-family="Liberation Sans, sans-serif" stroke="#000" stroke-width="0.5" textLength="293" lengthAdjust="spacingAndGlyphs">Electron current density [A.m^{-2}]</text>
</svg>
<!-- slider -->
<div class="abs" style="left:34px;top:914.5px;width:1055px;height:5px;box-sizing:border-box;border:1px solid #b6b6b6;border-radius:2.5px;background:#d6d6d6;"></div>
<div class="abs" style="left:34px;top:914.5px;width:900px;height:5px;box-sizing:border-box;border:1px solid #2a72ba;border-radius:2.5px;background:#3d9be6;"></div>
<div class="abs" style="left:927.5px;top:911px;width:13px;height:13px;box-sizing:border-box;border:1px solid #a8a8a8;border-radius:3px;background:linear-gradient(#ffffff,#ececec);"></div>
<svg class="abs" style="left:0;top:924px" width="1147" height="8"><path d="M41.5 2.5v4M227.5 2.5v4M413.5 2.5v4M599.5 2.5v4M785.5 2.5v4M970.5 2.5v4" stroke="#b0b0b0" stroke-width="1"/></svg>
<div class="abs" style="left:1096px;top:914.5px;line-height:16px;">24</div>
<!-- icons -->
<svg class="abs" style="left:30px;top:950px" width="170" height="40" viewBox="30 950 170 40">
 <defs>
  <linearGradient id="gb" x1="0" y1="0" x2="0" y2="1"><stop offset="0" stop-color="#9dbbe6"/><stop offset="1" stop-color="#6f98d2"/></linearGradient>
  <linearGradient id="gg" x1="0" y1="0" x2="0" y2="1"><stop offset="0" stop-color="#8ad03a"/><stop offset="1" stop-color="#4e9a10"/></linearGradient>
 </defs>
 <path d="M46.2 961.2h5.4v6.8h6.8v5.4h-6.8v6h-5.4v-6h-6.8v-5.4h6.8z" fill="url(#gb)" stroke="#6a92cc" stroke-width="0.8"/>
 <rect x="79" y="968" width="22" height="5.6" fill="url(#gb)" stroke="#6a92cc" stroke-width="0.8"/>
 <ellipse cx="130.5" cy="980.5" rx="9" ry="1.6" fill="#d8d8d8"/><ellipse cx="171.7" cy="980.5" rx="9" ry="1.6" fill="#d8d8d8"/>
 <path d="M124.2 957.4h12.7v8.8h5.3L130.5 979.5L118.8 966.2h5.4z" fill="url(#gg)" stroke="#4c8c14" stroke-width="0.9" stroke-linejoin="round"/>
 <path d="M171.7 957.2L183.4 970.2h-5.4v9.3h-12.7v-9.3h-5.3z" fill="url(#gg)" stroke="#4c8c14" stroke-width="0.9" stroke-linejoin="round"/>
</svg>
<!-- table -->
<div class="abs" style="left:25px;top:1000px;width:1097.5px;height:134.5px;box-sizing:border-box;border:1px solid #b8b8b8;background:#fff;"></div>
<div class="abs" style="left:26px;top:1001px;width:1095.5px;height:21px;background:#efefef;"></div>
<div class="abs" style="left:26px;top:1001px;width:513px;height:21px;background:linear-gradient(#fbfbfb,#e6e6e6);border-right:1px solid #c4c4c4;box-sizing:border-box;"></div>
<div class="abs" style="left:26px;top:1022px;width:14px;height:111.5px;background:#efefef;"></div>
<div class="abs" style="left:26px;top:1022px;width:14px;height:29px;background:linear-gradient(90deg,#f8f8f8,#e8e8e8);border-bottom:1px solid #c4c4c4;box-sizing:border-box;"></div>
<div class="abs" style="left:438.5px;top:1001px;width:1px;height:21px;background:#c4c4c4;"></div>
<div class="abs" style="left:26px;top:1021px;width:513px;height:1px;background:#bdbdbd;"></div>
<div class="lbl" style="left:239.5px;top:1004px;font-weight:bold;">File to plot</div>
<div class="lbl" style="left:489.5px;top:1004px;font-weight:bold;">Plot type</div>
<div class="abs" style="left:29px;top:1029px;font-weight:bold;line-height:15px;">1</div>
<div class="abs" style="left:39.5px;top:1021.5px;width:399.5px;height:30px;box-sizing:border-box;border:1px solid #a2a2a2;border-radius:2px;background:linear-gradient(#fefefe,#ececec);"></div>
<div class="abs" style="left:439.5px;top:1021.5px;width:99.5px;height:30px;box-sizing:border-box;border:1px solid #a2a2a2;border-radius:2px;background:linear-gradient(#fefefe,#ececec);"></div>
<div class="abs" style="left:44.5px;top:1029px;line-height:15px;">Jn.csv</div>
<div class="abs" style="left:445px;top:1029px;line-height:15px;">Wireframe</div>
<svg class="abs" style="left:420px;top:1030px" width="120" height="12"><path d="M2.6 4.2h8l-4 4.4z" fill="#555"/><path d="M102.6 4.2h8l-4 4.4z" fill="#555"/></svg>
<div class="abs" style="left:22px;top:1154px;line-height:16px;">/home/rod/Desktop/dfsdsffdssdf/snapshots</div>
<svg class="abs" style="left:1116px;top:1155px" width="18" height="18"><g fill="#c0c0c0"><rect x="13" y="2" width="1.3" height="1.3"/><rect x="10" y="5" width="1.3" height="1.3"/><rect x="13" y="5" width="1.3" height="1.3"/><rect x="7" y="8" width="1.3" height="1.3"/><rect x="10" y="8" width="1.3" height="1.3"/><rect x="13" y="8" width="1.3" height="1.3"/><rect x="4" y="11" width="1.3" height="1.3"/><rect x="7" y="11" width="1.3" height="1.3"/><rect x="10" y="11" width="1.3" height="1.3"/><rect x="13" y="11" width="1.3" height="1.3"/></g></svg>

</div>
</body></html>
